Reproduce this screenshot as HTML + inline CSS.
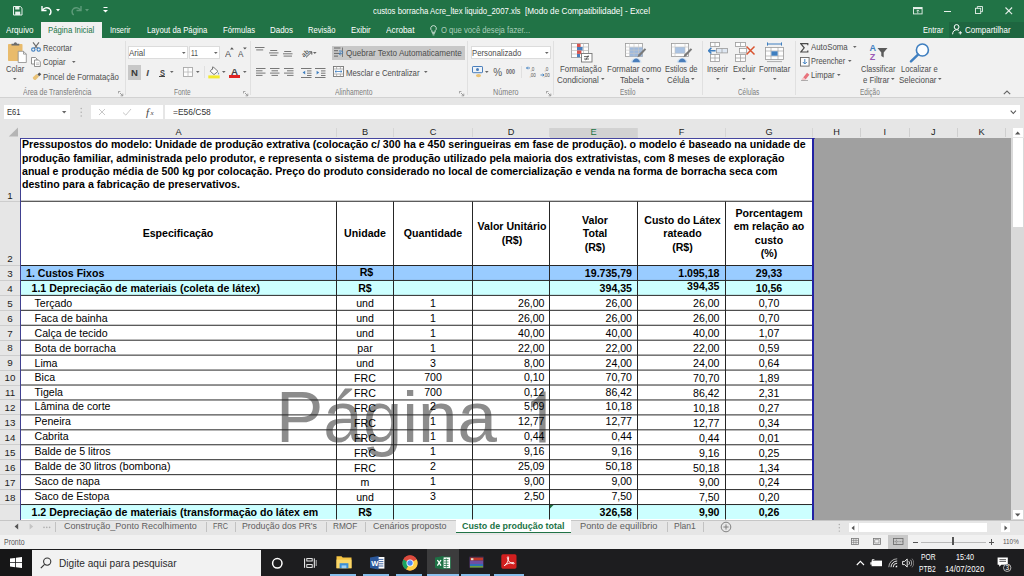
<!DOCTYPE html>
<html><head><meta charset="utf-8"><title>Excel</title>
<style>
html,body{margin:0;padding:0;}
body{width:1024px;height:576px;overflow:hidden;position:relative;background:#e6e6e6;font-family:"Liberation Sans",sans-serif;}
div,svg{box-sizing:border-box;}
.g{position:absolute;}
</style></head><body>
<div style="position:absolute;left:0px;top:0px;width:1024px;height:37.5px;background:#217346;"></div>
<div style="position:absolute;left:372.5px;top:5.8px;font-size:9px;line-height:11px;color:#fff;font-weight:normal;white-space:nowrap;transform-origin:0 0;transform:scaleX(0.8646);">custos borracha Acre_ltex liquido_2007.xls</div>
<div style="position:absolute;left:525px;top:5.8px;font-size:9px;line-height:11px;color:#fff;font-weight:normal;white-space:nowrap;transform-origin:0 0;transform:scaleX(0.9119);">[Modo de Compatibilidade] - Excel</div>
<svg style="position:absolute;left:13px;top:6px" width="10" height="10" viewBox="0 0 10 10"><path d="M0.5 0.5h6.8l1.7 1.7v6.8h-8.5z" fill="none" stroke="#e8f1ec" stroke-width="1"/><rect x="2.2" y="0.5" width="4.2" height="3" fill="#e8f1ec"/><rect x="2.2" y="5.6" width="5" height="3.4" fill="#e8f1ec"/></svg>
<svg style="position:absolute;left:41px;top:5px" width="12" height="11" viewBox="0 0 12 11"><path d="M1 1v4.5h4.5" fill="none" stroke="#fff" stroke-width="1.4"/><path d="M1.5 5.2C3 2.8 6 2 8.3 3.5c2.2 1.6 2.2 4.6 0 6.5" fill="none" stroke="#fff" stroke-width="1.5"/></svg>
<svg style="position:absolute;left:56px;top:9px" width="5" height="3" viewBox="0 0 5 3"><path d="M0 0h4l-2 2.4z" fill="#fff"/></svg>
<svg style="position:absolute;left:70px;top:5px" width="12" height="11" viewBox="0 0 12 11"><path d="M11 1v4.5h-4.5" fill="none" stroke="#5e9b7a" stroke-width="1.4"/><path d="M10.5 5.2C9 2.8 6 2 3.7 3.5c-2.2 1.6-2.2 4.6 0 6.5" fill="none" stroke="#5e9b7a" stroke-width="1.5"/></svg>
<svg style="position:absolute;left:85px;top:9px" width="5" height="3" viewBox="0 0 5 3"><path d="M0 0h4l-2 2.4z" fill="#5e9b7a"/></svg>
<svg style="position:absolute;left:103px;top:7px" width="6" height="7" viewBox="0 0 6 7"><rect x="0.5" y="0" width="4" height="1" fill="#fff"/><path d="M0 3h5l-2.5 2.6z" fill="#fff"/></svg>
<svg style="position:absolute;left:913px;top:6.8px" width="10" height="8" viewBox="0 0 10 8"><rect x="0.5" y="0.5" width="8.6" height="6.4" fill="none" stroke="#e8f1ec" stroke-width="0.9"/><rect x="0.5" y="0.5" width="8.6" height="1.6" fill="#e8f1ec"/><path d="M4.8 3v3.4M3.4 4.3l1.4-1.4 1.4 1.4" stroke="#e8f1ec" stroke-width="0.8" fill="none"/></svg>
<div style="position:absolute;left:944px;top:11.2px;width:7px;height:1px;background:#e8f1ec;"></div>
<svg style="position:absolute;left:974.5px;top:5.8px" width="8" height="8" viewBox="0 0 8 8"><rect x="0.5" y="2.3" width="5.2" height="5.2" fill="none" stroke="#e8f1ec" stroke-width="0.9"/><path d="M2.3 2.3v-1.8h5.2v5.2h-1.8" fill="none" stroke="#e8f1ec" stroke-width="0.9"/></svg>
<svg style="position:absolute;left:1004.6px;top:6.8px" width="8" height="8" viewBox="0 0 8 8"><path d="M0.5 0.5l6.6 6.6M7.1 0.5l-6.6 6.6" stroke="#e8f1ec" stroke-width="1.1"/></svg>
<div style="position:absolute;left:41px;top:22px;width:61px;height:16px;background:#f1f1f1;"></div>
<div style="position:absolute;left:5.5px;top:25.0px;font-size:9px;line-height:11px;color:#fff;font-weight:normal;white-space:nowrap;transform-origin:0 0;transform:scaleX(0.9012);">Arquivo</div>
<div style="position:absolute;left:48px;top:25.0px;font-size:9px;line-height:11px;color:#217346;font-weight:normal;white-space:nowrap;transform-origin:0 0;transform:scaleX(0.8649);">Página Inicial</div>
<div style="position:absolute;left:110px;top:25.0px;font-size:9px;line-height:11px;color:#fff;font-weight:normal;white-space:nowrap;transform-origin:0 0;transform:scaleX(0.8198);">Inserir</div>
<div style="position:absolute;left:146.7px;top:25.0px;font-size:9px;line-height:11px;color:#fff;font-weight:normal;white-space:nowrap;transform-origin:0 0;transform:scaleX(0.8607);">Layout da Página</div>
<div style="position:absolute;left:222.5px;top:25.0px;font-size:9px;line-height:11px;color:#fff;font-weight:normal;white-space:nowrap;transform-origin:0 0;transform:scaleX(0.8532);">Fórmulas</div>
<div style="position:absolute;left:270px;top:25.0px;font-size:9px;line-height:11px;color:#fff;font-weight:normal;white-space:nowrap;transform-origin:0 0;transform:scaleX(0.8841);">Dados</div>
<div style="position:absolute;left:308px;top:25.0px;font-size:9px;line-height:11px;color:#fff;font-weight:normal;white-space:nowrap;transform-origin:0 0;transform:scaleX(0.8458);">Revisão</div>
<div style="position:absolute;left:350.8px;top:25.0px;font-size:9px;line-height:11px;color:#fff;font-weight:normal;white-space:nowrap;transform-origin:0 0;transform:scaleX(0.8754);">Exibir</div>
<div style="position:absolute;left:386px;top:25.0px;font-size:9px;line-height:11px;color:#fff;font-weight:normal;white-space:nowrap;transform-origin:0 0;transform:scaleX(0.9189);">Acrobat</div>
<svg style="position:absolute;left:430px;top:24.5px" width="7" height="11" viewBox="0 0 7 11"><path d="M3.5 0.6a2.8 2.8 0 0 1 1.6 5.1v1.6h-3.2v-1.6a2.8 2.8 0 0 1 1.6-5.1z" fill="none" stroke="#dcebe2" stroke-width="0.9"/><path d="M2.2 8.6h2.6M2.6 9.9h1.8" stroke="#dcebe2" stroke-width="0.8"/></svg>
<div style="position:absolute;left:441px;top:25.0px;font-size:9px;line-height:11px;color:#a9cdb9;font-weight:normal;white-space:nowrap;transform-origin:0 0;transform:scaleX(0.8512);">O que você deseja fazer...</div>
<div style="position:absolute;left:923px;top:25.0px;font-size:9px;line-height:11px;color:#fff;font-weight:normal;white-space:nowrap;transform-origin:0 0;transform:scaleX(0.8364);">Entrar</div>
<div style="position:absolute;left:949px;top:22px;width:75px;height:15.5px;background:#1e6640;"></div>
<svg style="position:absolute;left:951.5px;top:24px" width="11" height="11" viewBox="0 0 11 11"><circle cx="4.6" cy="3" r="2.4" fill="none" stroke="#fff" stroke-width="1"/><path d="M0.6 10.3c0-3 1.8-4.5 4-4.5 0.9 0 1.7 0.2 2.3 0.6" fill="none" stroke="#fff" stroke-width="1"/><path d="M6.6 8.8h3.4M8.3 7.1v3.4" stroke="#fff" stroke-width="0.9"/></svg>
<div style="position:absolute;left:964.8px;top:25.0px;font-size:9px;line-height:11px;color:#fff;font-weight:normal;white-space:nowrap;transform-origin:0 0;transform:scaleX(0.8851);">Compartilhar</div>
<div style="position:absolute;left:0px;top:37.5px;width:1024px;height:60px;background:#f1f1f1;"></div>
<div style="position:absolute;left:0px;top:97px;width:1024px;height:1px;background:#d2d2d2;"></div>
<div style="position:absolute;left:4px;top:104.6px;width:66px;height:14.6px;background:#fff;"></div>
<div style="position:absolute;left:7px;top:107px;font-size:9px;line-height:11px;color:#333;font-weight:normal;white-space:nowrap;transform-origin:0 0;transform:scaleX(0.8430);">E61</div>
<svg style="position:absolute;left:62px;top:111px" width="5" height="3" viewBox="0 0 5 3"><path d="M0 0h4.4l-2.2 2.4z" fill="#666"/></svg>
<svg style="position:absolute;left:80px;top:107px" width="3" height="11" viewBox="0 0 3 11"><circle cx="1.2" cy="1.5" r="0.7" fill="#aaa"/><circle cx="1.2" cy="5.3" r="0.7" fill="#aaa"/><circle cx="1.2" cy="9" r="0.7" fill="#aaa"/></svg>
<div style="position:absolute;left:91px;top:104.6px;width:72px;height:14.6px;background:#fff;"></div>
<svg style="position:absolute;left:98px;top:108px" width="8" height="8" viewBox="0 0 8 8"><path d="M1 1l6 6M7 1l-6 6" stroke="#c8c8c8" stroke-width="1"/></svg>
<svg style="position:absolute;left:122px;top:108px" width="10" height="8" viewBox="0 0 10 8"><path d="M1 4.5l2.8 2.6L9 1" stroke="#c8c8c8" stroke-width="1" fill="none"/></svg>
<div style="position:absolute;top:105.5px;font-size:11px;line-height:13px;color:#444;font-weight:normal;white-space:nowrap;left:146px;font-family:'Liberation Serif',serif;"><i>f</i></div>
<div style="position:absolute;top:109px;font-size:7px;line-height:9px;color:#444;font-weight:normal;white-space:nowrap;left:150.5px;font-family:'Liberation Serif',serif;font-style:italic;">x</div>
<div style="position:absolute;left:165px;top:104.6px;width:855px;height:14.6px;background:#fff;"></div>
<div style="position:absolute;left:173px;top:107px;font-size:9px;line-height:11px;color:#333;font-weight:normal;white-space:nowrap;transform-origin:0 0;transform:scaleX(0.9384);">=E56/C58</div>
<svg style="position:absolute;left:1010px;top:110px" width="7" height="5" viewBox="0 0 7 5"><path d="M0.7 0.7l2.6 2.8 2.6-2.8" stroke="#555" stroke-width="1.1" fill="none"/></svg>
<div style="position:absolute;left:124.5px;top:41px;width:1px;height:54px;background:#e0e0e0;"></div>
<div style="position:absolute;left:250px;top:41px;width:1px;height:54px;background:#e0e0e0;"></div>
<div style="position:absolute;left:467px;top:41px;width:1px;height:54px;background:#e0e0e0;"></div>
<div style="position:absolute;left:552.5px;top:41px;width:1px;height:54px;background:#e0e0e0;"></div>
<div style="position:absolute;left:701.5px;top:41px;width:1px;height:54px;background:#e0e0e0;"></div>
<div style="position:absolute;left:795px;top:41px;width:1px;height:54px;background:#e0e0e0;"></div>
<svg style="position:absolute;left:7px;top:41px" width="21" height="23" viewBox="0 0 21 23"><rect x="1" y="3" width="14.5" height="17" rx="0.8" fill="#e9bb6c"/><path d="M4.5 4.6V2.8h2.3a1.6 1.6 0 0 1 3.2 0h2.3v1.8z" fill="#6b6b6b"/><path d="M11.2 10.3h5.3l2.8 2.8v8.4h-8.1z" fill="#fff" stroke="#8a8a8a" stroke-width="0.8"/><path d="M16.5 10.3v2.8h2.8" fill="none" stroke="#8a8a8a" stroke-width="0.8"/></svg>
<div style="position:absolute;left:5.6px;top:64.28px;font-size:9px;line-height:11px;color:#4d4d4d;font-weight:normal;white-space:nowrap;transform-origin:0 0;transform:scaleX(0.8462);">Colar</div>
<svg style="position:absolute;left:13.2px;top:78px" width="4" height="3" viewBox="0 0 4 3"><path d="M0 0h3.6l-1.8 2z" fill="#666"/></svg>
<svg style="position:absolute;left:30.5px;top:42px" width="10" height="10" viewBox="0 0 10 10"><path d="M2 0.3l4.6 6M8 0.3L3.4 6.3" stroke="#6c6c6c" stroke-width="1.1" fill="none"/><circle cx="2.3" cy="7.6" r="1.7" fill="none" stroke="#3f7fc0" stroke-width="1.1"/><circle cx="7.7" cy="7.6" r="1.7" fill="none" stroke="#3f7fc0" stroke-width="1.1"/></svg>
<div style="position:absolute;left:43px;top:42.53px;font-size:9px;line-height:11px;color:#4d4d4d;font-weight:normal;white-space:nowrap;transform-origin:0 0;transform:scaleX(0.8403);">Recortar</div>
<svg style="position:absolute;left:31px;top:57px" width="10" height="10" viewBox="0 0 10 10"><path d="M0.5 0.5h4l1.5 1.5v5h-5.5z" fill="#fff" stroke="#777" stroke-width="0.8"/><path d="M3.5 3h4l1.8 1.8v4.7h-5.8z" fill="#fff" stroke="#777" stroke-width="0.8"/><path d="M5 6h3M5 7.6h3" stroke="#999" stroke-width="0.6"/></svg>
<div style="position:absolute;left:43px;top:56.78px;font-size:9px;line-height:11px;color:#4d4d4d;font-weight:normal;white-space:nowrap;transform-origin:0 0;transform:scaleX(0.8524);">Copiar</div>
<svg style="position:absolute;left:71.9px;top:60.5px" width="4" height="3" viewBox="0 0 4 3"><path d="M0 0h3.6l-1.8 2z" fill="#666"/></svg>
<svg style="position:absolute;left:31.5px;top:72px" width="10" height="9" viewBox="0 0 10 9"><path d="M5.3 2.4L7.4 0.4l1.9 1.9-2.1 2z" fill="#555"/><path d="M1 5.2l3.4-3.2 2.6 2.6-3.4 3.3c-1 0.9-3.6-1.7-2.6-2.7z" fill="#e9c277"/></svg>
<div style="position:absolute;left:43px;top:71.53px;font-size:9px;line-height:11px;color:#4d4d4d;font-weight:normal;white-space:nowrap;transform-origin:0 0;transform:scaleX(0.8659);">Pincel de Formatação</div>
<div style="position:absolute;left:23px;top:87.2px;font-size:8.5px;line-height:10.5px;color:#7c7c7c;font-weight:normal;white-space:nowrap;transform-origin:0 0;transform:scaleX(0.8167);">Área de Transferência</div>
<svg style="position:absolute;left:117.5px;top:90.5px" width="6" height="6" viewBox="0 0 6 6"><path d="M0.4 2.4V0.4H2.4" fill="none" stroke="#8a8a8a" stroke-width="0.8"/><path d="M2 2l2.6 2.6M4.8 2.6v2.2H2.6" fill="none" stroke="#8a8a8a" stroke-width="0.8"/></svg>
<div style="position:absolute;left:127.7px;top:45.7px;width:60.3px;height:13.6px;background:#fff;border:1px solid #dcdcdc;"></div>
<div style="position:absolute;left:188.6px;top:45.7px;width:31px;height:13.6px;background:#fff;border:1px solid #dcdcdc;"></div>
<div style="position:absolute;left:129.4px;top:47.98px;font-size:9px;line-height:11px;color:#4d4d4d;font-weight:normal;white-space:nowrap;transform-origin:0 0;transform:scaleX(0.8887);">Arial</div>
<svg style="position:absolute;left:182.2px;top:51.5px" width="4" height="3" viewBox="0 0 4 3"><path d="M0 0h3.6l-1.8 2z" fill="#666"/></svg>
<div style="position:absolute;left:191px;top:47.98px;font-size:9px;line-height:11px;color:#4d4d4d;font-weight:normal;white-space:nowrap;transform-origin:0 0;transform:scaleX(0.7278);">11</div>
<svg style="position:absolute;left:213.5px;top:51.5px" width="4" height="3" viewBox="0 0 4 3"><path d="M0 0h3.6l-1.8 2z" fill="#666"/></svg>
<div style="position:absolute;left:224.5px;top:48.06px;font-size:9.5px;line-height:11.5px;color:#4d4d4d;font-weight:normal;white-space:nowrap;transform-origin:0 0;transform:scaleX(0.9469);">A</div>
<svg style="position:absolute;left:229.5px;top:46.5px" width="4" height="3" viewBox="0 0 4 3"><path d="M0 2.4L1.9 0.3 3.8 2.4z" fill="#555"/></svg>
<div style="position:absolute;left:238px;top:48.9px;font-size:8.5px;line-height:10.5px;color:#4d4d4d;font-weight:normal;white-space:nowrap;transform-origin:0 0;transform:scaleX(0.9525);">A</div>
<svg style="position:absolute;left:242.5px;top:46.7px" width="4" height="3" viewBox="0 0 4 3"><path d="M0 0.4h3.8L1.9 2.5z" fill="#555"/></svg>
<div style="position:absolute;left:127.7px;top:64.5px;width:13.4px;height:15px;background:#c8c8c8;"></div>
<div style="position:absolute;left:130.9px;top:66.66px;font-size:9.5px;line-height:11.5px;color:#3a3a3a;font-weight:bold;white-space:nowrap;transform-origin:0 0;transform:scaleX(1.0057);">N</div>
<div style="position:absolute;top:66.66px;font-size:9.5px;line-height:11.5px;color:#4a4a4a;font-weight:bold;white-space:nowrap;left:146.3px;font-style:italic;">I</div>
<div style="position:absolute;left:159.6px;top:66.66px;font-size:9.5px;line-height:11.5px;color:#444;font-weight:bold;white-space:nowrap;transform-origin:0 0;transform:scaleX(0.7891);">S</div>
<div style="position:absolute;left:159.4px;top:76.0px;width:5.6px;height:0.9px;background:#444;"></div>
<svg style="position:absolute;left:170.2px;top:70.5px" width="4" height="3" viewBox="0 0 4 3"><path d="M0 0h3.6l-1.8 2z" fill="#666"/></svg>
<svg style="position:absolute;left:183px;top:67.4px" width="10" height="10" viewBox="0 0 10 10"><rect x="0.5" y="0.5" width="9" height="9" fill="#fdfdfd" stroke="#a8a8a8" stroke-width="0.9"/><path d="M5 0.5v9M0.5 5h9" stroke="#b8b8b8" stroke-width="0.8"/></svg>
<svg style="position:absolute;left:196.2px;top:70.5px" width="4" height="3" viewBox="0 0 4 3"><path d="M0 0h3.6l-1.8 2z" fill="#666"/></svg>
<div style="position:absolute;left:204px;top:66px;width:1px;height:12px;background:#e0e0e0;"></div>
<svg style="position:absolute;left:208px;top:65.5px" width="12" height="13" viewBox="0 0 12 13"><path d="M5.6 1.2L10 5.4 6 8.6 2.2 5.2z" fill="#fbfbfb" stroke="#6f6f6f" stroke-width="0.9"/><path d="M4.6 3.6V0.6" stroke="#6f6f6f" stroke-width="0.9"/><path d="M10.4 6.2c0.8 1 1 1.6 0.4 2.2-0.8 0.2-1-0.8-0.4-2.2z" fill="#6a8fc0"/><rect x="0.3" y="9.4" width="11.4" height="3" fill="#f3ea2e"/></svg>
<svg style="position:absolute;left:221.5px;top:70.5px" width="4" height="3" viewBox="0 0 4 3"><path d="M0 0h3.6l-1.8 2z" fill="#666"/></svg>
<div style="position:absolute;left:230.6px;top:66.06px;font-size:9.5px;line-height:11.5px;color:#444;font-weight:bold;white-space:nowrap;transform-origin:0 0;transform:scaleX(1.0203);">A</div>
<div style="position:absolute;left:228.6px;top:74.9px;width:11px;height:2.9px;background:#e02222;"></div>
<svg style="position:absolute;left:242.5px;top:70.5px" width="4" height="3" viewBox="0 0 4 3"><path d="M0 0h3.6l-1.8 2z" fill="#666"/></svg>
<div style="position:absolute;left:173.8px;top:87.2px;font-size:8.5px;line-height:10.5px;color:#7c7c7c;font-weight:normal;white-space:nowrap;transform-origin:0 0;transform:scaleX(0.7637);">Fonte</div>
<svg style="position:absolute;left:242.5px;top:90.5px" width="6" height="6" viewBox="0 0 6 6"><path d="M0.4 2.4V0.4H2.4" fill="none" stroke="#8a8a8a" stroke-width="0.8"/><path d="M2 2l2.6 2.6M4.8 2.6v2.2H2.6" fill="none" stroke="#8a8a8a" stroke-width="0.8"/></svg>
<svg style="position:absolute;left:255px;top:46.5px" width="11" height="12" viewBox="0 0 11 12"><rect x="0" y="0.0" width="9.5" height="1" fill="#777"/><rect x="1.2" y="2.4" width="7" height="1" fill="#777"/></svg>
<svg style="position:absolute;left:269px;top:50px" width="11" height="12" viewBox="0 0 11 12"><rect x="1.2" y="0.0" width="7" height="1" fill="#777"/><rect x="0" y="2.4" width="9.5" height="1" fill="#777"/><rect x="1.2" y="4.8" width="7" height="1" fill="#777"/></svg>
<svg style="position:absolute;left:283px;top:51.4px" width="11" height="12" viewBox="0 0 11 12"><rect x="1.2" y="0.0" width="7" height="1" fill="#777"/><rect x="0" y="2.3" width="9.5" height="1" fill="#777"/><rect x="0.6" y="4.6" width="8.4" height="1" fill="#777"/></svg>
<svg style="position:absolute;left:300.5px;top:46.5px" width="12" height="12" viewBox="0 0 12 12"><text x="0.2" y="8.6" font-size="6.6" font-weight="bold" font-family="Liberation Sans" fill="#5a5a5a" transform="rotate(-40 4 6)">ab</text><path d="M5 10.4l5.6-5.400M10.8 7.600V4.800H8" stroke="#555" stroke-width="1" fill="none"/></svg>
<svg style="position:absolute;left:313.2px;top:51.5px" width="4" height="3" viewBox="0 0 4 3"><path d="M0 0h3.6l-1.8 2z" fill="#666"/></svg>
<svg style="position:absolute;left:256px;top:68.3px" width="11" height="12" viewBox="0 0 11 12"><rect x="0" y="0.0" width="9.5" height="1" fill="#777"/><rect x="0" y="2.3" width="6.5" height="1" fill="#777"/><rect x="0" y="4.6" width="9.5" height="1" fill="#777"/><rect x="0" y="6.8999999999999995" width="6.5" height="1" fill="#777"/></svg>
<svg style="position:absolute;left:270px;top:68.3px" width="11" height="12" viewBox="0 0 11 12"><rect x="0" y="0.0" width="9.5" height="1" fill="#777"/><rect x="1.5" y="2.3" width="6.5" height="1" fill="#777"/><rect x="0" y="4.6" width="9.5" height="1" fill="#777"/><rect x="1.5" y="6.8999999999999995" width="6.5" height="1" fill="#777"/></svg>
<svg style="position:absolute;left:283.5px;top:68.3px" width="11" height="12" viewBox="0 0 11 12"><rect x="0" y="0.0" width="9.5" height="1" fill="#777"/><rect x="3" y="2.3" width="6.5" height="1" fill="#777"/><rect x="0" y="4.6" width="9.5" height="1" fill="#777"/><rect x="3" y="6.8999999999999995" width="6.5" height="1" fill="#777"/></svg>
<svg style="position:absolute;left:301px;top:67.8px" width="11" height="10" viewBox="0 0 11 10"><rect x="0" y="0" width="10.5" height="1" fill="#777"/><rect x="6" y="2.4" width="4.5" height="1" fill="#777"/><rect x="6" y="4.7" width="4.5" height="1" fill="#777"/><rect x="6" y="7" width="4.5" height="1" fill="#777"/><rect x="0" y="9" width="10.5" height="1" fill="#777"/><path d="M4.2 2.8L1.6 4.6l2.6 1.8z" fill="#3f7fc0"/></svg>
<svg style="position:absolute;left:315px;top:67.8px" width="11" height="10" viewBox="0 0 11 10"><rect x="0" y="0" width="10.5" height="1" fill="#777"/><rect x="6" y="2.4" width="4.5" height="1" fill="#777"/><rect x="6" y="4.7" width="4.5" height="1" fill="#777"/><rect x="6" y="7" width="4.5" height="1" fill="#777"/><rect x="0" y="9" width="10.5" height="1" fill="#777"/><path d="M1.6 2.8l2.6 1.8-2.6 1.8z" fill="#3f7fc0"/></svg>
<div style="position:absolute;left:332px;top:45.5px;width:132.5px;height:14px;background:#c8c8c8;"></div>
<svg style="position:absolute;left:334px;top:47px" width="10" height="11" viewBox="0 0 10 11"><rect x="0" y="0.5" width="6.5" height="1" fill="#666"/><rect x="0" y="3.2" width="4" height="1" fill="#666"/><rect x="0" y="5.9" width="6.5" height="1" fill="#666"/><rect x="0" y="8.6" width="4" height="1" fill="#666"/><path d="M8.5 0.5v9.5" stroke="#666" stroke-width="0.8"/><path d="M5 4h2.2a1.3 1.3 0 0 1 0 2.8H5.4M6.6 5.4L5 6.8l1.6 1.3" stroke="#3f7fc0" stroke-width="0.9" fill="none"/></svg>
<div style="position:absolute;left:345.5px;top:47.78px;font-size:9px;line-height:11px;color:#4d4d4d;font-weight:normal;white-space:nowrap;transform-origin:0 0;transform:scaleX(0.8983);">Quebrar Texto Automaticamente</div>
<svg style="position:absolute;left:333px;top:66px" width="11" height="11" viewBox="0 0 11 11"><rect x="0.5" y="0.5" width="10" height="10" fill="#fdfdfd" stroke="#777" stroke-width="0.9"/><path d="M0.5 3h10M0.5 8h10M3.6 0.5V3M7.4 0.5V3M3.6 8v2.5M7.4 8v2.5" stroke="#999" stroke-width="0.7"/><path d="M2 5.5h7M3.4 4.4L2 5.5l1.4 1.1M7.6 4.4L9 5.5 7.6 6.6" stroke="#3f7fc0" stroke-width="0.8" fill="none"/></svg>
<div style="position:absolute;left:345.5px;top:67.53px;font-size:9px;line-height:11px;color:#4d4d4d;font-weight:normal;white-space:nowrap;transform-origin:0 0;transform:scaleX(0.8644);">Mesclar e Centralizar</div>
<svg style="position:absolute;left:424.2px;top:70.5px" width="4" height="3" viewBox="0 0 4 3"><path d="M0 0h3.6l-1.8 2z" fill="#666"/></svg>
<div style="position:absolute;left:334.5px;top:87.2px;font-size:8.5px;line-height:10.5px;color:#7c7c7c;font-weight:normal;white-space:nowrap;transform-origin:0 0;transform:scaleX(0.7936);">Alinhamento</div>
<svg style="position:absolute;left:459.0px;top:90.5px" width="6" height="6" viewBox="0 0 6 6"><path d="M0.4 2.4V0.4H2.4" fill="none" stroke="#8a8a8a" stroke-width="0.8"/><path d="M2 2l2.6 2.6M4.8 2.6v2.2H2.6" fill="none" stroke="#8a8a8a" stroke-width="0.8"/></svg>
<div style="position:absolute;left:470.5px;top:45.7px;width:80.5px;height:13.6px;background:#fff;border:1px solid #dcdcdc;"></div>
<div style="position:absolute;left:472px;top:47.78px;font-size:9px;line-height:11px;color:#4d4d4d;font-weight:normal;white-space:nowrap;transform-origin:0 0;transform:scaleX(0.8644);">Personalizado</div>
<svg style="position:absolute;left:544.7px;top:51.5px" width="4" height="3" viewBox="0 0 4 3"><path d="M0 0h3.6l-1.8 2z" fill="#666"/></svg>
<svg style="position:absolute;left:471.5px;top:66px" width="12" height="12" viewBox="0 0 12 12"><rect x="0.5" y="0.5" width="10" height="6.2" rx="0.6" fill="#eef3f8" stroke="#4a7ebb" stroke-width="1"/><circle cx="5.5" cy="3.6" r="1.5" fill="#4a7ebb"/><ellipse cx="6.5" cy="9.6" rx="2.6" ry="1.6" fill="#e9c277"/></svg>
<svg style="position:absolute;left:485.2px;top:70.5px" width="4" height="3" viewBox="0 0 4 3"><path d="M0 0h3.6l-1.8 2z" fill="#666"/></svg>
<div style="position:absolute;top:67.03px;font-size:10px;line-height:12px;color:#5a5a5a;font-weight:normal;white-space:nowrap;left:493.2px;">%</div>
<div style="position:absolute;left:506.3px;top:68.47px;font-size:6.6px;line-height:8.6px;color:#666;font-weight:bold;white-space:nowrap;transform-origin:0 0;transform:scaleX(0.8173);">000</div>
<div style="position:absolute;left:520.5px;top:66px;width:1px;height:12px;background:#e0e0e0;"></div>
<svg style="position:absolute;left:526px;top:66px" width="10" height="12" viewBox="0 0 10 12"><path d="M0.5 2h3.5M1.8 0.7L0.5 2l1.3 1.3" stroke="#3f7fc0" stroke-width="0.9" fill="none"/><text x="4.6" y="4.6" font-size="4.6" font-family="Liberation Sans" fill="#555">,0</text><text x="3.4" y="10.6" font-size="4.6" font-family="Liberation Sans" fill="#555">,00</text></svg>
<svg style="position:absolute;left:540px;top:66px" width="10" height="12" viewBox="0 0 10 12"><path d="M0.5 9h3.5M2.7 7.7L4 9 2.7 10.3" stroke="#3f7fc0" stroke-width="0.9" fill="none"/><text x="4.6" y="4.6" font-size="4.6" font-family="Liberation Sans" fill="#555">,0</text><text x="3.4" y="10.6" font-size="4.6" font-family="Liberation Sans" fill="#555">,00</text></svg>
<div style="position:absolute;left:492.5px;top:87.2px;font-size:8.5px;line-height:10.5px;color:#7c7c7c;font-weight:normal;white-space:nowrap;transform-origin:0 0;transform:scaleX(0.8435);">Número</div>
<svg style="position:absolute;left:545.5px;top:90.5px" width="6" height="6" viewBox="0 0 6 6"><path d="M0.4 2.4V0.4H2.4" fill="none" stroke="#8a8a8a" stroke-width="0.8"/><path d="M2 2l2.6 2.6M4.8 2.6v2.2H2.6" fill="none" stroke="#8a8a8a" stroke-width="0.8"/></svg>
<svg style="position:absolute;left:571px;top:43px" width="22" height="20" viewBox="0 0 22 20"><rect x="0.5" y="0.5" width="17" height="14" fill="#fdfdfd" stroke="#9a9a9a" stroke-width="0.8"/><path d="M0.5 4h17M0.5 7.5h17M0.5 11h17M12.5 0.5v14" stroke="#bbb" stroke-width="0.7"/><rect x="6" y="0.8" width="3.6" height="3.2" fill="#d9534f"/><rect x="6" y="4" width="5.6" height="3.4" fill="#4a7ebb"/><rect x="6" y="7.5" width="4.4" height="3.4" fill="#d9534f"/><rect x="6" y="11" width="3" height="3.2" fill="#4a7ebb"/><rect x="10.5" y="10.5" width="10.5" height="8.5" fill="#fff" stroke="#777" stroke-width="0.9"/><path d="M13 13.6h5M13 16h5M17.3 12.4l-2.6 4.8" stroke="#444" stroke-width="0.8"/></svg>
<div style="position:absolute;left:559.5px;top:63.78px;font-size:9px;line-height:11px;color:#4d4d4d;font-weight:normal;white-space:nowrap;transform-origin:0 0;transform:scaleX(0.8705);">Formatação</div>
<div style="position:absolute;left:557px;top:74.53px;font-size:9px;line-height:11px;color:#4d4d4d;font-weight:normal;white-space:nowrap;transform-origin:0 0;transform:scaleX(0.8888);">Condicional</div>
<svg style="position:absolute;left:600.9000000000001px;top:78px" width="4" height="3" viewBox="0 0 4 3"><path d="M0 0h3.6l-1.8 2z" fill="#666"/></svg>
<svg style="position:absolute;left:624.5px;top:43px" width="22" height="20" viewBox="0 0 22 20"><rect x="0.5" y="0.5" width="17" height="13" fill="#fdfdfd" stroke="#9a9a9a" stroke-width="0.8"/><rect x="4.5" y="4.2" width="13" height="9.3" fill="#9fb9dc"/><path d="M0.5 4h17M0.5 7.2h17M0.5 10.4h17M4.5 0.5v13M9 0.5v13M13.5 0.5v13" stroke="#c8c8c8" stroke-width="0.6"/><path d="M19.8 5.2l1.4 1.4-6.2 6.6-2.6 1 1-2.6z" fill="#7a7a7a"/><path d="M5.6 19.4c1-6 10-6 11 0z" fill="#cfe0f2"/><path d="M7.4 19.2c1.2-4.800 6.400-4.800 7.600 0z" fill="#4a7ebb"/></svg>
<div style="position:absolute;left:607px;top:63.78px;font-size:9px;line-height:11px;color:#4d4d4d;font-weight:normal;white-space:nowrap;transform-origin:0 0;transform:scaleX(0.8900);">Formatar como</div>
<div style="position:absolute;left:620px;top:74.53px;font-size:9px;line-height:11px;color:#4d4d4d;font-weight:normal;white-space:nowrap;transform-origin:0 0;transform:scaleX(0.8974);">Tabela</div>
<svg style="position:absolute;left:645.5px;top:78px" width="4" height="3" viewBox="0 0 4 3"><path d="M0 0h3.6l-1.8 2z" fill="#666"/></svg>
<svg style="position:absolute;left:670.5px;top:43px" width="22" height="20" viewBox="0 0 22 20"><rect x="0.5" y="0.5" width="17" height="13" fill="#fdfdfd" stroke="#9a9a9a" stroke-width="0.8"/><rect x="4" y="4" width="10" height="6.4" fill="#a9c2e2"/><path d="M0.5 4h17M0.5 10.4h17M4 0.5v13M14 0.5v13" stroke="#c4c4c4" stroke-width="0.6"/><path d="M19.8 5.2l1.4 1.4-6.2 6.6-2.6 1 1-2.6z" fill="#7a7a7a"/><path d="M5.6 19.4c1-6 10-6 11 0z" fill="#cfe0f2"/><path d="M7.4 19.2c1.2-4.800 6.400-4.800 7.600 0z" fill="#4a7ebb"/></svg>
<div style="position:absolute;left:664.5px;top:63.78px;font-size:9px;line-height:11px;color:#4d4d4d;font-weight:normal;white-space:nowrap;transform-origin:0 0;transform:scaleX(0.8329);">Estilos de</div>
<div style="position:absolute;left:667px;top:74.53px;font-size:9px;line-height:11px;color:#4d4d4d;font-weight:normal;white-space:nowrap;transform-origin:0 0;transform:scaleX(0.8818);">Célula</div>
<svg style="position:absolute;left:691.0px;top:78px" width="4" height="3" viewBox="0 0 4 3"><path d="M0 0h3.6l-1.8 2z" fill="#666"/></svg>
<div style="position:absolute;left:619.5px;top:87.2px;font-size:8.5px;line-height:10.5px;color:#7c7c7c;font-weight:normal;white-space:nowrap;transform-origin:0 0;transform:scaleX(0.7457);">Estilo</div>
<svg style="position:absolute;left:707.5px;top:42px" width="21" height="21" viewBox="0 0 21 21"><rect x="2.5" y="0.5" width="9" height="4" fill="#fdfdfd" stroke="#9a9a9a" stroke-width="0.8"/><rect x="8.5" y="6.5" width="11" height="4.4" fill="#dfe8f3" stroke="#9a9a9a" stroke-width="0.8"/><rect x="2.5" y="12.5" width="9" height="7" fill="#fdfdfd" stroke="#9a9a9a" stroke-width="0.8"/><path d="M2.5 16h9M7 12.5v7M7 0.5v4M14 6.5v4.4" stroke="#9a9a9a" stroke-width="0.7"/><path d="M0.6 8.7h7M3.4 5.8L0.6 8.7l2.8 2.9" stroke="#3f7fc0" stroke-width="1.5" fill="none"/></svg>
<div style="position:absolute;left:707px;top:63.78px;font-size:9px;line-height:11px;color:#4d4d4d;font-weight:normal;white-space:nowrap;transform-origin:0 0;transform:scaleX(0.8398);">Inserir</div>
<svg style="position:absolute;left:715.7px;top:78px" width="4" height="3" viewBox="0 0 4 3"><path d="M0 0h3.6l-1.8 2z" fill="#666"/></svg>
<svg style="position:absolute;left:734.5px;top:42px" width="21" height="21" viewBox="0 0 21 21"><rect x="0.5" y="0.5" width="10" height="4" fill="#fdfdfd" stroke="#9a9a9a" stroke-width="0.8"/><rect x="4.5" y="6.5" width="7" height="4.4" fill="#fdfdfd" stroke="#9a9a9a" stroke-width="0.8"/><rect x="0.5" y="12.5" width="10" height="7" fill="#fdfdfd" stroke="#9a9a9a" stroke-width="0.8"/><path d="M0.5 16h10M5.5 12.5v7M5.5 0.5v4" stroke="#9a9a9a" stroke-width="0.7"/><path d="M11.5 4.5l8 8M19.5 4.5l-8 8" stroke="#d9532f" stroke-width="1.5" fill="none"/></svg>
<div style="position:absolute;left:732.5px;top:63.78px;font-size:9px;line-height:11px;color:#4d4d4d;font-weight:normal;white-space:nowrap;transform-origin:0 0;transform:scaleX(0.8332);">Excluir</div>
<svg style="position:absolute;left:742.0px;top:78px" width="4" height="3" viewBox="0 0 4 3"><path d="M0 0h3.6l-1.8 2z" fill="#666"/></svg>
<svg style="position:absolute;left:764.5px;top:42px" width="21" height="21" viewBox="0 0 21 21"><path d="M2.5 2h14M2.5 0.4v3.2M16.5 0.4v3.2" stroke="#3f7fc0" stroke-width="1"/><rect x="0.5" y="5.5" width="18" height="12" fill="#fdfdfd" stroke="#9a9a9a" stroke-width="0.8"/><path d="M0.5 9h18M0.5 14h18M6 5.5v12M13 5.5v12" stroke="#9a9a9a" stroke-width="0.6"/><rect x="6.4" y="9.3" width="6.2" height="4.4" fill="#3f7fc0"/><path d="M2 19.6h15" stroke="#9a9a9a" stroke-width="0.8"/></svg>
<div style="position:absolute;left:758.8px;top:63.78px;font-size:9px;line-height:11px;color:#4d4d4d;font-weight:normal;white-space:nowrap;transform-origin:0 0;transform:scaleX(0.8547);">Formatar</div>
<svg style="position:absolute;left:772.7px;top:78px" width="4" height="3" viewBox="0 0 4 3"><path d="M0 0h3.6l-1.8 2z" fill="#666"/></svg>
<div style="position:absolute;left:737.5px;top:87.2px;font-size:8.5px;line-height:10.5px;color:#7c7c7c;font-weight:normal;white-space:nowrap;transform-origin:0 0;transform:scaleX(0.7514);">Células</div>
<svg style="position:absolute;left:800px;top:42.5px" width="9" height="10" viewBox="0 0 9 10"><path d="M7.8 2.2V0.7H0.8l3.4 4.1-3.4 4.2h7V7.4" fill="none" stroke="#4a4a4a" stroke-width="1.2"/></svg>
<div style="position:absolute;left:811.3px;top:42.03px;font-size:9px;line-height:11px;color:#4d4d4d;font-weight:normal;white-space:nowrap;transform-origin:0 0;transform:scaleX(0.8733);">AutoSoma</div>
<svg style="position:absolute;left:852.9000000000001px;top:45.5px" width="4" height="3" viewBox="0 0 4 3"><path d="M0 0h3.6l-1.8 2z" fill="#666"/></svg>
<svg style="position:absolute;left:799.5px;top:57px" width="10" height="10" viewBox="0 0 10 10"><rect x="0.5" y="0.5" width="8.6" height="8.6" fill="#fdfdfd" stroke="#666" stroke-width="0.9"/><path d="M4.8 2v4.8M2.8 5l2 2 2-2" stroke="#3f7fc0" stroke-width="1" fill="none"/></svg>
<div style="position:absolute;left:811.3px;top:56.28px;font-size:9px;line-height:11px;color:#4d4d4d;font-weight:normal;white-space:nowrap;transform-origin:0 0;transform:scaleX(0.8236);">Preencher</div>
<svg style="position:absolute;left:847.5px;top:60px" width="4" height="3" viewBox="0 0 4 3"><path d="M0 0h3.6l-1.8 2z" fill="#666"/></svg>
<svg style="position:absolute;left:799.5px;top:71.5px" width="10" height="9" viewBox="0 0 10 9"><path d="M3.2 5.6L7 0.8l2.4 2-3.8 4.8z" fill="#e8737d"/><path d="M3.2 5.6l2.4 2-1 0.8H2.6L1.4 7.2z" fill="#f2c4c8"/><path d="M1 8.6h7" stroke="#888" stroke-width="0.7"/></svg>
<div style="position:absolute;left:811.3px;top:70.28px;font-size:9px;line-height:11px;color:#4d4d4d;font-weight:normal;white-space:nowrap;transform-origin:0 0;transform:scaleX(0.8615);">Limpar</div>
<svg style="position:absolute;left:837.4000000000001px;top:74px" width="4" height="3" viewBox="0 0 4 3"><path d="M0 0h3.6l-1.8 2z" fill="#666"/></svg>
<svg style="position:absolute;left:867.5px;top:42.5px" width="21" height="19" viewBox="0 0 21 19"><text x="1.5" y="8" font-size="9" font-weight="bold" font-family="Liberation Sans" fill="#3f7fc0">A</text><text x="1.8" y="17" font-size="9" font-weight="bold" font-family="Liberation Sans" fill="#9b59b6">Z</text><path d="M9.5 5h10l-3.8 4.4v5.2l-2.4-1.6V9.4z" fill="#5a5a5a"/></svg>
<div style="position:absolute;left:860.5px;top:63.78px;font-size:9px;line-height:11px;color:#4d4d4d;font-weight:normal;white-space:nowrap;transform-origin:0 0;transform:scaleX(0.8312);">Classificar</div>
<div style="position:absolute;left:862.5px;top:74.53px;font-size:9px;line-height:11px;color:#4d4d4d;font-weight:normal;white-space:nowrap;transform-origin:0 0;transform:scaleX(0.8622);">e Filtrar</div>
<svg style="position:absolute;left:890.5px;top:78px" width="4" height="3" viewBox="0 0 4 3"><path d="M0 0h3.6l-1.8 2z" fill="#666"/></svg>
<svg style="position:absolute;left:909px;top:42.5px" width="22" height="20" viewBox="0 0 22 20"><circle cx="13.4" cy="7" r="6" fill="#fbfdff" stroke="#3f7fc0" stroke-width="1.6"/><path d="M9 11.6L2 18.4" stroke="#3f7fc0" stroke-width="2.4" stroke-linecap="round"/></svg>
<div style="position:absolute;left:900.8px;top:63.78px;font-size:9px;line-height:11px;color:#4d4d4d;font-weight:normal;white-space:nowrap;transform-origin:0 0;transform:scaleX(0.8432);">Localizar e</div>
<div style="position:absolute;left:898.8px;top:74.53px;font-size:9px;line-height:11px;color:#4d4d4d;font-weight:normal;white-space:nowrap;transform-origin:0 0;transform:scaleX(0.8818);">Selecionar</div>
<svg style="position:absolute;left:937.5px;top:78px" width="4" height="3" viewBox="0 0 4 3"><path d="M0 0h3.6l-1.8 2z" fill="#666"/></svg>
<div style="position:absolute;left:859.5px;top:87.2px;font-size:8.5px;line-height:10.5px;color:#7c7c7c;font-weight:normal;white-space:nowrap;transform-origin:0 0;transform:scaleX(0.7618);">Edição</div>
<svg style="position:absolute;left:1003px;top:89.5px" width="8" height="5" viewBox="0 0 8 5"><path d="M0.8 4.2L4 1l3.2 3.2" stroke="#666" stroke-width="1.1" fill="none"/></svg>
<div style="position:absolute;left:0px;top:122px;width:1024px;height:16.5px;background:#e6e6e6;"></div>
<div style="position:absolute;left:549.5px;top:127.5px;width:88px;height:11px;background:#d2d2d2;border-bottom:1.5px solid #5a8f74;"></div>
<div style="position:absolute;top:127.2px;font-size:9.2px;line-height:11.2px;color:#1c1c1c;font-weight:normal;white-space:nowrap;left:28.5px;width:300px;text-align:center;">A</div>
<div style="position:absolute;top:127.2px;font-size:9.2px;line-height:11.2px;color:#1c1c1c;font-weight:normal;white-space:nowrap;left:215.0px;width:300px;text-align:center;">B</div>
<div style="position:absolute;top:127.2px;font-size:9.2px;line-height:11.2px;color:#1c1c1c;font-weight:normal;white-space:nowrap;left:283.0px;width:300px;text-align:center;">C</div>
<div style="position:absolute;top:127.2px;font-size:9.2px;line-height:11.2px;color:#1c1c1c;font-weight:normal;white-space:nowrap;left:361.0px;width:300px;text-align:center;">D</div>
<div style="position:absolute;top:127.2px;font-size:9.2px;line-height:11.2px;color:#217346;font-weight:normal;white-space:nowrap;left:443.5px;width:300px;text-align:center;">E</div>
<div style="position:absolute;top:127.2px;font-size:9.2px;line-height:11.2px;color:#1c1c1c;font-weight:normal;white-space:nowrap;left:531.5px;width:300px;text-align:center;">F</div>
<div style="position:absolute;top:127.2px;font-size:9.2px;line-height:11.2px;color:#1c1c1c;font-weight:normal;white-space:nowrap;left:619.0px;width:300px;text-align:center;">G</div>
<div style="position:absolute;top:127.2px;font-size:9.2px;line-height:11.2px;color:#1c1c1c;font-weight:normal;white-space:nowrap;left:686.5px;width:300px;text-align:center;">H</div>
<div style="position:absolute;top:127.2px;font-size:9.2px;line-height:11.2px;color:#1c1c1c;font-weight:normal;white-space:nowrap;left:734.75px;width:300px;text-align:center;">I</div>
<div style="position:absolute;top:127.2px;font-size:9.2px;line-height:11.2px;color:#1c1c1c;font-weight:normal;white-space:nowrap;left:783.25px;width:300px;text-align:center;">J</div>
<div style="position:absolute;top:127.2px;font-size:9.2px;line-height:11.2px;color:#1c1c1c;font-weight:normal;white-space:nowrap;left:831.5px;width:300px;text-align:center;">K</div>
<div style="position:absolute;left:860.0px;top:128px;width:1px;height:9px;background:#cfcfcf;"></div>
<div style="position:absolute;left:908.5px;top:128px;width:1px;height:9px;background:#cfcfcf;"></div>
<div style="position:absolute;left:957.0px;top:128px;width:1px;height:9px;background:#cfcfcf;"></div>
<div style="position:absolute;left:1005.0px;top:128px;width:1px;height:9px;background:#cfcfcf;"></div>
<div style="position:absolute;left:336.0px;top:128px;width:1px;height:9px;background:#d6d6d6;"></div>
<div style="position:absolute;left:393.0px;top:128px;width:1px;height:9px;background:#d6d6d6;"></div>
<div style="position:absolute;left:472.0px;top:128px;width:1px;height:9px;background:#d6d6d6;"></div>
<div style="position:absolute;left:549.0px;top:128px;width:1px;height:9px;background:#d6d6d6;"></div>
<div style="position:absolute;left:637.0px;top:128px;width:1px;height:9px;background:#d6d6d6;"></div>
<div style="position:absolute;left:725.0px;top:128px;width:1px;height:9px;background:#d6d6d6;"></div>
<div style="position:absolute;left:812.0px;top:128px;width:1px;height:9px;background:#d6d6d6;"></div>
<svg style="position:absolute;left:8px;top:127px" width="11" height="10" viewBox="0 0 11 10"><path d="M10 0.5v9H0.8z" fill="#b5b5b5"/></svg>
<div style="position:absolute;left:813px;top:138.0px;width:198px;height:381.5px;background:#a0a0a0;"></div>
<div style="position:absolute;left:20.5px;top:138.5px;width:792px;height:381.0px;background:#fff;"></div>
<div style="position:absolute;left:20.5px;top:265.5px;width:792px;height:14.94px;background:#99ccff;"></div>
<div style="position:absolute;left:20.5px;top:280.44px;width:792px;height:14.94px;background:#ccffff;"></div>
<div style="position:absolute;left:20.5px;top:504.53999999999996px;width:792px;height:14.960000000000036px;background:#ccffff;"></div>
<div style="position:absolute;left:275.6px;top:374.9px;font-size:72.5px;line-height:74.5px;color:#8c8c8c;font-weight:normal;white-space:nowrap;transform-origin:0 0;transform:scaleX(0.9790);line-height:84px;">Página</div>
<svg style="position:absolute;left:528px;top:388px" width="20" height="58" viewBox="0 0 20 58"><path d="M17.6 54.4h-6.3V14.6C9 16.8 5.8 18.6 3 19.8v-6C7.6 11.400 11.600 7.800 13.400 3.400h4.200z" fill="#8c8c8c"/></svg>
<div style="position:absolute;left:0px;top:138.5px;width:20px;height:381.0px;background:#e6e6e6;"></div>
<div style="position:absolute;top:189.8px;font-size:9.8px;line-height:11.8px;color:#1c1c1c;font-weight:normal;white-space:nowrap;left:-140px;width:300px;text-align:center;">1</div>
<div style="position:absolute;left:0px;top:201.0px;width:19.5px;height:1px;background:#cdcdcd;"></div>
<div style="position:absolute;top:252.8px;font-size:9.8px;line-height:11.8px;color:#1c1c1c;font-weight:normal;white-space:nowrap;left:-140px;width:300px;text-align:center;">2</div>
<div style="position:absolute;left:0px;top:265.0px;width:19.5px;height:1px;background:#cdcdcd;"></div>
<div style="position:absolute;top:267.74px;font-size:9.8px;line-height:11.8px;color:#1c1c1c;font-weight:normal;white-space:nowrap;left:-140px;width:300px;text-align:center;">3</div>
<div style="position:absolute;left:0px;top:279.94px;width:19.5px;height:1px;background:#cdcdcd;"></div>
<div style="position:absolute;top:282.68px;font-size:9.8px;line-height:11.8px;color:#1c1c1c;font-weight:normal;white-space:nowrap;left:-140px;width:300px;text-align:center;">4</div>
<div style="position:absolute;left:0px;top:294.88px;width:19.5px;height:1px;background:#cdcdcd;"></div>
<div style="position:absolute;top:297.62px;font-size:9.8px;line-height:11.8px;color:#1c1c1c;font-weight:normal;white-space:nowrap;left:-140px;width:300px;text-align:center;">5</div>
<div style="position:absolute;left:0px;top:309.82px;width:19.5px;height:1px;background:#cdcdcd;"></div>
<div style="position:absolute;top:312.56px;font-size:9.8px;line-height:11.8px;color:#1c1c1c;font-weight:normal;white-space:nowrap;left:-140px;width:300px;text-align:center;">6</div>
<div style="position:absolute;left:0px;top:324.76px;width:19.5px;height:1px;background:#cdcdcd;"></div>
<div style="position:absolute;top:327.5px;font-size:9.8px;line-height:11.8px;color:#1c1c1c;font-weight:normal;white-space:nowrap;left:-140px;width:300px;text-align:center;">7</div>
<div style="position:absolute;left:0px;top:339.7px;width:19.5px;height:1px;background:#cdcdcd;"></div>
<div style="position:absolute;top:342.44px;font-size:9.8px;line-height:11.8px;color:#1c1c1c;font-weight:normal;white-space:nowrap;left:-140px;width:300px;text-align:center;">8</div>
<div style="position:absolute;left:0px;top:354.64px;width:19.5px;height:1px;background:#cdcdcd;"></div>
<div style="position:absolute;top:357.38px;font-size:9.8px;line-height:11.8px;color:#1c1c1c;font-weight:normal;white-space:nowrap;left:-140px;width:300px;text-align:center;">9</div>
<div style="position:absolute;left:0px;top:369.58px;width:19.5px;height:1px;background:#cdcdcd;"></div>
<div style="position:absolute;top:372.32px;font-size:9.8px;line-height:11.8px;color:#1c1c1c;font-weight:normal;white-space:nowrap;left:-140px;width:300px;text-align:center;">10</div>
<div style="position:absolute;left:0px;top:384.52px;width:19.5px;height:1px;background:#cdcdcd;"></div>
<div style="position:absolute;top:387.26000000000005px;font-size:9.8px;line-height:11.8px;color:#1c1c1c;font-weight:normal;white-space:nowrap;left:-140px;width:300px;text-align:center;">11</div>
<div style="position:absolute;left:0px;top:399.46000000000004px;width:19.5px;height:1px;background:#cdcdcd;"></div>
<div style="position:absolute;top:402.2px;font-size:9.8px;line-height:11.8px;color:#1c1c1c;font-weight:normal;white-space:nowrap;left:-140px;width:300px;text-align:center;">12</div>
<div style="position:absolute;left:0px;top:414.4px;width:19.5px;height:1px;background:#cdcdcd;"></div>
<div style="position:absolute;top:417.14000000000004px;font-size:9.8px;line-height:11.8px;color:#1c1c1c;font-weight:normal;white-space:nowrap;left:-140px;width:300px;text-align:center;">13</div>
<div style="position:absolute;left:0px;top:429.34000000000003px;width:19.5px;height:1px;background:#cdcdcd;"></div>
<div style="position:absolute;top:432.08px;font-size:9.8px;line-height:11.8px;color:#1c1c1c;font-weight:normal;white-space:nowrap;left:-140px;width:300px;text-align:center;">14</div>
<div style="position:absolute;left:0px;top:444.28px;width:19.5px;height:1px;background:#cdcdcd;"></div>
<div style="position:absolute;top:447.02000000000004px;font-size:9.8px;line-height:11.8px;color:#1c1c1c;font-weight:normal;white-space:nowrap;left:-140px;width:300px;text-align:center;">15</div>
<div style="position:absolute;left:0px;top:459.22px;width:19.5px;height:1px;background:#cdcdcd;"></div>
<div style="position:absolute;top:461.96px;font-size:9.8px;line-height:11.8px;color:#1c1c1c;font-weight:normal;white-space:nowrap;left:-140px;width:300px;text-align:center;">16</div>
<div style="position:absolute;left:0px;top:474.15999999999997px;width:19.5px;height:1px;background:#cdcdcd;"></div>
<div style="position:absolute;top:476.90000000000003px;font-size:9.8px;line-height:11.8px;color:#1c1c1c;font-weight:normal;white-space:nowrap;left:-140px;width:300px;text-align:center;">17</div>
<div style="position:absolute;left:0px;top:489.1px;width:19.5px;height:1px;background:#cdcdcd;"></div>
<div style="position:absolute;top:491.84px;font-size:9.8px;line-height:11.8px;color:#1c1c1c;font-weight:normal;white-space:nowrap;left:-140px;width:300px;text-align:center;">18</div>
<div style="position:absolute;left:0px;top:504.03999999999996px;width:19.5px;height:1px;background:#cdcdcd;"></div>
<svg style="position:absolute;left:0;top:0" width="1024" height="576" viewBox="0 0 1024 576"><path d="M20.5 201.3H812.5" stroke="#262626" stroke-width="1.1"/><path d="M20.5 265.50H812.5" stroke="#262626" stroke-width="1"/><path d="M20.5 280.44H812.5" stroke="#262626" stroke-width="1"/><path d="M20.5 295.38H812.5" stroke="#262626" stroke-width="1"/><path d="M20.5 310.32H812.5" stroke="#262626" stroke-width="1"/><path d="M20.5 325.26H812.5" stroke="#262626" stroke-width="1"/><path d="M20.5 340.20H812.5" stroke="#262626" stroke-width="1"/><path d="M20.5 355.14H812.5" stroke="#262626" stroke-width="1"/><path d="M20.5 370.08H812.5" stroke="#262626" stroke-width="1"/><path d="M20.5 385.02H812.5" stroke="#262626" stroke-width="1"/><path d="M20.5 399.96H812.5" stroke="#262626" stroke-width="1"/><path d="M20.5 414.90H812.5" stroke="#262626" stroke-width="1"/><path d="M20.5 429.84H812.5" stroke="#262626" stroke-width="1"/><path d="M20.5 444.78H812.5" stroke="#262626" stroke-width="1"/><path d="M20.5 459.72H812.5" stroke="#262626" stroke-width="1"/><path d="M20.5 474.66H812.5" stroke="#262626" stroke-width="1"/><path d="M20.5 489.60H812.5" stroke="#262626" stroke-width="1"/><path d="M20.5 504.54H812.5" stroke="#262626" stroke-width="1"/><path d="M336.5 201.5V519.5" stroke="#262626" stroke-width="1"/><path d="M393.5 201.5V519.5" stroke="#262626" stroke-width="1"/><path d="M472.5 201.5V519.5" stroke="#262626" stroke-width="1"/><path d="M549.5 201.5V519.5" stroke="#262626" stroke-width="1"/><path d="M637.5 201.5V519.5" stroke="#262626" stroke-width="1"/><path d="M725.5 201.5V519.5" stroke="#262626" stroke-width="1"/></svg>
<div style="position:absolute;left:20px;top:137.5px;width:794.5px;height:1.3px;background:#4646a0;"></div>
<div style="position:absolute;left:20px;top:137.5px;width:1.3px;height:382.0px;background:#404090;"></div>
<div style="position:absolute;left:811.8px;top:137.5px;width:2.7px;height:382.0px;background:#2222a4;"></div>
<div style="position:absolute;top:138.35px;font-size:10.6px;line-height:12.6px;color:#000;font-weight:bold;white-space:nowrap;left:22px;line-height:13px;">Pressupostos do modelo: Unidade de produção extrativa (colocação c/ 300 ha e 450 seringueiras em fase de produção). o modelo é baseado na unidade de</div>
<div style="position:absolute;top:151.6px;font-size:10.6px;line-height:12.6px;color:#000;font-weight:bold;white-space:nowrap;left:22px;line-height:13px;">produção familiar, administrada pelo produtor, e representa o sistema de produção utilizado pela maioria dos extrativistas, com 8 meses de exploração</div>
<div style="position:absolute;top:164.85px;font-size:10.6px;line-height:12.6px;color:#000;font-weight:bold;white-space:nowrap;left:22px;line-height:13px;">anual e produção média de 500 kg por colocação. Preço do produto considerado no local de comercialização e venda na forma de borracha seca com</div>
<div style="position:absolute;top:178.1px;font-size:10.6px;line-height:12.6px;color:#000;font-weight:bold;white-space:nowrap;left:22px;line-height:13px;">destino para a fabricação de preservativos.</div>
<div style="position:absolute;top:227.325px;font-size:10.6px;line-height:12.6px;color:#000;font-weight:bold;white-space:nowrap;left:28px;width:300px;text-align:center;line-height:13px;">Especificação</div>
<div style="position:absolute;top:227.325px;font-size:10.6px;line-height:12.6px;color:#000;font-weight:bold;white-space:nowrap;left:215.0px;width:300px;text-align:center;line-height:13px;">Unidade</div>
<div style="position:absolute;top:227.325px;font-size:10.6px;line-height:12.6px;color:#000;font-weight:bold;white-space:nowrap;left:283.0px;width:300px;text-align:center;line-height:13px;">Quantidade</div>
<div style="position:absolute;top:220.24999999999997px;font-size:10.6px;line-height:12.6px;color:#000;font-weight:bold;white-space:nowrap;left:362px;width:300px;text-align:center;line-height:13px;">Valor Unitário</div>
<div style="position:absolute;top:233.79999999999998px;font-size:10.6px;line-height:12.6px;color:#000;font-weight:bold;white-space:nowrap;left:362px;width:300px;text-align:center;line-height:13px;">(R$)</div>
<div style="position:absolute;top:213.77499999999998px;font-size:10.6px;line-height:12.6px;color:#000;font-weight:bold;white-space:nowrap;left:445px;width:300px;text-align:center;line-height:13px;">Valor</div>
<div style="position:absolute;top:227.325px;font-size:10.6px;line-height:12.6px;color:#000;font-weight:bold;white-space:nowrap;left:445px;width:300px;text-align:center;line-height:13px;">Total</div>
<div style="position:absolute;top:240.87499999999997px;font-size:10.6px;line-height:12.6px;color:#000;font-weight:bold;white-space:nowrap;left:445px;width:300px;text-align:center;line-height:13px;">(R$)</div>
<div style="position:absolute;top:213.77499999999998px;font-size:10.6px;line-height:12.6px;color:#000;font-weight:bold;white-space:nowrap;left:532.5px;width:300px;text-align:center;line-height:13px;">Custo do Látex</div>
<div style="position:absolute;top:227.325px;font-size:10.6px;line-height:12.6px;color:#000;font-weight:bold;white-space:nowrap;left:532.5px;width:300px;text-align:center;line-height:13px;">rateado</div>
<div style="position:absolute;top:240.87499999999997px;font-size:10.6px;line-height:12.6px;color:#000;font-weight:bold;white-space:nowrap;left:532.5px;width:300px;text-align:center;line-height:13px;">(R$)</div>
<div style="position:absolute;top:206.8px;font-size:10.6px;line-height:12.6px;color:#000;font-weight:bold;white-space:nowrap;left:619px;width:300px;text-align:center;line-height:13px;">Porcentagem</div>
<div style="position:absolute;top:220.35000000000002px;font-size:10.6px;line-height:12.6px;color:#000;font-weight:bold;white-space:nowrap;left:619px;width:300px;text-align:center;line-height:13px;">em relação ao</div>
<div style="position:absolute;top:233.9px;font-size:10.6px;line-height:12.6px;color:#000;font-weight:bold;white-space:nowrap;left:619px;width:300px;text-align:center;line-height:13px;">custo</div>
<div style="position:absolute;top:247.45000000000002px;font-size:10.6px;line-height:12.6px;color:#000;font-weight:bold;white-space:nowrap;left:619px;width:300px;text-align:center;line-height:13px;">(%)</div>
<div style="position:absolute;top:266.7px;font-size:10.6px;line-height:12.6px;color:#000;font-weight:bold;white-space:nowrap;left:26px;line-height:13px;">1. Custos Fixos</div>
<div style="position:absolute;top:266.0px;font-size:10.6px;line-height:12.6px;color:#000;font-weight:bold;white-space:nowrap;left:216.5px;width:300px;text-align:center;line-height:13px;">R$</div>
<div style="position:absolute;top:266.7px;font-size:10.6px;line-height:12.6px;color:#000;font-weight:bold;white-space:nowrap;left:332px;width:300px;text-align:right;line-height:13px;">19.735,79</div>
<div style="position:absolute;top:266.7px;font-size:10.6px;line-height:12.6px;color:#000;font-weight:bold;white-space:nowrap;left:419.5px;width:300px;text-align:right;line-height:13px;">1.095,18</div>
<div style="position:absolute;top:266.7px;font-size:10.6px;line-height:12.6px;color:#000;font-weight:bold;white-space:nowrap;left:619.0px;width:300px;text-align:center;line-height:13px;">29,33</div>
<div style="position:absolute;top:281.64px;font-size:10.6px;line-height:12.6px;color:#000;font-weight:bold;white-space:nowrap;left:31.5px;line-height:13px;">1.1 Depreciação de materiais (coleta de látex)</div>
<div style="position:absolute;top:281.64px;font-size:10.6px;line-height:12.6px;color:#000;font-weight:bold;white-space:nowrap;left:215.0px;width:300px;text-align:center;line-height:13px;">R$</div>
<div style="position:absolute;top:281.64px;font-size:10.6px;line-height:12.6px;color:#000;font-weight:bold;white-space:nowrap;left:332px;width:300px;text-align:right;line-height:13px;">394,35</div>
<div style="position:absolute;top:280.14px;font-size:10.6px;line-height:12.6px;color:#000;font-weight:bold;white-space:nowrap;left:419.5px;width:300px;text-align:right;line-height:13px;">394,35</div>
<div style="position:absolute;top:281.64px;font-size:10.6px;line-height:12.6px;color:#000;font-weight:bold;white-space:nowrap;left:619.0px;width:300px;text-align:center;line-height:13px;">10,56</div>
<div style="position:absolute;top:296.78px;font-size:10.6px;line-height:12.6px;color:#000;font-weight:normal;white-space:nowrap;left:34.5px;line-height:13px;">Terçado</div>
<div style="position:absolute;top:296.78px;font-size:10.6px;line-height:12.6px;color:#000;font-weight:normal;white-space:nowrap;left:215.0px;width:300px;text-align:center;line-height:13px;">und</div>
<div style="position:absolute;top:296.78px;font-size:10.6px;line-height:12.6px;color:#000;font-weight:normal;white-space:nowrap;left:283.0px;width:300px;text-align:center;line-height:13px;">1</div>
<div style="position:absolute;top:296.78px;font-size:10.6px;line-height:12.6px;color:#000;font-weight:normal;white-space:nowrap;left:244.5px;width:300px;text-align:right;line-height:13px;">26,00</div>
<div style="position:absolute;top:296.78px;font-size:10.6px;line-height:12.6px;color:#000;font-weight:normal;white-space:nowrap;left:332px;width:300px;text-align:right;line-height:13px;">26,00</div>
<div style="position:absolute;top:296.78px;font-size:10.6px;line-height:12.6px;color:#000;font-weight:normal;white-space:nowrap;left:419.5px;width:300px;text-align:right;line-height:13px;">26,00</div>
<div style="position:absolute;top:296.78px;font-size:10.6px;line-height:12.6px;color:#000;font-weight:normal;white-space:nowrap;left:619.0px;width:300px;text-align:center;line-height:13px;">0,70</div>
<div style="position:absolute;top:311.71999999999997px;font-size:10.6px;line-height:12.6px;color:#000;font-weight:normal;white-space:nowrap;left:34.5px;line-height:13px;">Faca de bainha</div>
<div style="position:absolute;top:311.71999999999997px;font-size:10.6px;line-height:12.6px;color:#000;font-weight:normal;white-space:nowrap;left:215.0px;width:300px;text-align:center;line-height:13px;">und</div>
<div style="position:absolute;top:311.71999999999997px;font-size:10.6px;line-height:12.6px;color:#000;font-weight:normal;white-space:nowrap;left:283.0px;width:300px;text-align:center;line-height:13px;">1</div>
<div style="position:absolute;top:311.71999999999997px;font-size:10.6px;line-height:12.6px;color:#000;font-weight:normal;white-space:nowrap;left:244.5px;width:300px;text-align:right;line-height:13px;">26,00</div>
<div style="position:absolute;top:311.71999999999997px;font-size:10.6px;line-height:12.6px;color:#000;font-weight:normal;white-space:nowrap;left:332px;width:300px;text-align:right;line-height:13px;">26,00</div>
<div style="position:absolute;top:311.71999999999997px;font-size:10.6px;line-height:12.6px;color:#000;font-weight:normal;white-space:nowrap;left:419.5px;width:300px;text-align:right;line-height:13px;">26,00</div>
<div style="position:absolute;top:311.71999999999997px;font-size:10.6px;line-height:12.6px;color:#000;font-weight:normal;white-space:nowrap;left:619.0px;width:300px;text-align:center;line-height:13px;">0,70</div>
<div style="position:absolute;top:326.65999999999997px;font-size:10.6px;line-height:12.6px;color:#000;font-weight:normal;white-space:nowrap;left:34.5px;line-height:13px;">Calça de tecido</div>
<div style="position:absolute;top:326.65999999999997px;font-size:10.6px;line-height:12.6px;color:#000;font-weight:normal;white-space:nowrap;left:215.0px;width:300px;text-align:center;line-height:13px;">und</div>
<div style="position:absolute;top:326.65999999999997px;font-size:10.6px;line-height:12.6px;color:#000;font-weight:normal;white-space:nowrap;left:283.0px;width:300px;text-align:center;line-height:13px;">1</div>
<div style="position:absolute;top:326.65999999999997px;font-size:10.6px;line-height:12.6px;color:#000;font-weight:normal;white-space:nowrap;left:244.5px;width:300px;text-align:right;line-height:13px;">40,00</div>
<div style="position:absolute;top:326.65999999999997px;font-size:10.6px;line-height:12.6px;color:#000;font-weight:normal;white-space:nowrap;left:332px;width:300px;text-align:right;line-height:13px;">40,00</div>
<div style="position:absolute;top:326.65999999999997px;font-size:10.6px;line-height:12.6px;color:#000;font-weight:normal;white-space:nowrap;left:419.5px;width:300px;text-align:right;line-height:13px;">40,00</div>
<div style="position:absolute;top:326.65999999999997px;font-size:10.6px;line-height:12.6px;color:#000;font-weight:normal;white-space:nowrap;left:619.0px;width:300px;text-align:center;line-height:13px;">1,07</div>
<div style="position:absolute;top:341.59999999999997px;font-size:10.6px;line-height:12.6px;color:#000;font-weight:normal;white-space:nowrap;left:34.5px;line-height:13px;">Bota de borracha</div>
<div style="position:absolute;top:341.59999999999997px;font-size:10.6px;line-height:12.6px;color:#000;font-weight:normal;white-space:nowrap;left:215.0px;width:300px;text-align:center;line-height:13px;">par</div>
<div style="position:absolute;top:341.59999999999997px;font-size:10.6px;line-height:12.6px;color:#000;font-weight:normal;white-space:nowrap;left:283.0px;width:300px;text-align:center;line-height:13px;">1</div>
<div style="position:absolute;top:341.59999999999997px;font-size:10.6px;line-height:12.6px;color:#000;font-weight:normal;white-space:nowrap;left:244.5px;width:300px;text-align:right;line-height:13px;">22,00</div>
<div style="position:absolute;top:341.59999999999997px;font-size:10.6px;line-height:12.6px;color:#000;font-weight:normal;white-space:nowrap;left:332px;width:300px;text-align:right;line-height:13px;">22,00</div>
<div style="position:absolute;top:341.59999999999997px;font-size:10.6px;line-height:12.6px;color:#000;font-weight:normal;white-space:nowrap;left:419.5px;width:300px;text-align:right;line-height:13px;">22,00</div>
<div style="position:absolute;top:341.59999999999997px;font-size:10.6px;line-height:12.6px;color:#000;font-weight:normal;white-space:nowrap;left:619.0px;width:300px;text-align:center;line-height:13px;">0,59</div>
<div style="position:absolute;top:356.53999999999996px;font-size:10.6px;line-height:12.6px;color:#000;font-weight:normal;white-space:nowrap;left:34.5px;line-height:13px;">Lima</div>
<div style="position:absolute;top:356.53999999999996px;font-size:10.6px;line-height:12.6px;color:#000;font-weight:normal;white-space:nowrap;left:215.0px;width:300px;text-align:center;line-height:13px;">und</div>
<div style="position:absolute;top:356.53999999999996px;font-size:10.6px;line-height:12.6px;color:#000;font-weight:normal;white-space:nowrap;left:283.0px;width:300px;text-align:center;line-height:13px;">3</div>
<div style="position:absolute;top:356.53999999999996px;font-size:10.6px;line-height:12.6px;color:#000;font-weight:normal;white-space:nowrap;left:244.5px;width:300px;text-align:right;line-height:13px;">8,00</div>
<div style="position:absolute;top:356.53999999999996px;font-size:10.6px;line-height:12.6px;color:#000;font-weight:normal;white-space:nowrap;left:332px;width:300px;text-align:right;line-height:13px;">24,00</div>
<div style="position:absolute;top:356.53999999999996px;font-size:10.6px;line-height:12.6px;color:#000;font-weight:normal;white-space:nowrap;left:419.5px;width:300px;text-align:right;line-height:13px;">24,00</div>
<div style="position:absolute;top:356.53999999999996px;font-size:10.6px;line-height:12.6px;color:#000;font-weight:normal;white-space:nowrap;left:619.0px;width:300px;text-align:center;line-height:13px;">0,64</div>
<div style="position:absolute;top:370.58px;font-size:10.6px;line-height:12.6px;color:#000;font-weight:normal;white-space:nowrap;left:34.5px;line-height:13px;">Bica</div>
<div style="position:absolute;top:371.88px;font-size:10.6px;line-height:12.6px;color:#000;font-weight:normal;white-space:nowrap;left:215.0px;width:300px;text-align:center;line-height:13px;">FRC</div>
<div style="position:absolute;top:370.58px;font-size:10.6px;line-height:12.6px;color:#000;font-weight:normal;white-space:nowrap;left:283.0px;width:300px;text-align:center;line-height:13px;">700</div>
<div style="position:absolute;top:370.58px;font-size:10.6px;line-height:12.6px;color:#000;font-weight:normal;white-space:nowrap;left:244.5px;width:300px;text-align:right;line-height:13px;">0,10</div>
<div style="position:absolute;top:370.58px;font-size:10.6px;line-height:12.6px;color:#000;font-weight:normal;white-space:nowrap;left:332px;width:300px;text-align:right;line-height:13px;">70,70</div>
<div style="position:absolute;top:371.88px;font-size:10.6px;line-height:12.6px;color:#000;font-weight:normal;white-space:nowrap;left:419.5px;width:300px;text-align:right;line-height:13px;">70,70</div>
<div style="position:absolute;top:371.88px;font-size:10.6px;line-height:12.6px;color:#000;font-weight:normal;white-space:nowrap;left:619.0px;width:300px;text-align:center;line-height:13px;">1,89</div>
<div style="position:absolute;top:385.52px;font-size:10.6px;line-height:12.6px;color:#000;font-weight:normal;white-space:nowrap;left:34.5px;line-height:13px;">Tigela</div>
<div style="position:absolute;top:386.82px;font-size:10.6px;line-height:12.6px;color:#000;font-weight:normal;white-space:nowrap;left:215.0px;width:300px;text-align:center;line-height:13px;">FRC</div>
<div style="position:absolute;top:385.52px;font-size:10.6px;line-height:12.6px;color:#000;font-weight:normal;white-space:nowrap;left:283.0px;width:300px;text-align:center;line-height:13px;">700</div>
<div style="position:absolute;top:385.52px;font-size:10.6px;line-height:12.6px;color:#000;font-weight:normal;white-space:nowrap;left:244.5px;width:300px;text-align:right;line-height:13px;">0,12</div>
<div style="position:absolute;top:385.52px;font-size:10.6px;line-height:12.6px;color:#000;font-weight:normal;white-space:nowrap;left:332px;width:300px;text-align:right;line-height:13px;">86,42</div>
<div style="position:absolute;top:386.82px;font-size:10.6px;line-height:12.6px;color:#000;font-weight:normal;white-space:nowrap;left:419.5px;width:300px;text-align:right;line-height:13px;">86,42</div>
<div style="position:absolute;top:386.82px;font-size:10.6px;line-height:12.6px;color:#000;font-weight:normal;white-space:nowrap;left:619.0px;width:300px;text-align:center;line-height:13px;">2,31</div>
<div style="position:absolute;top:400.46000000000004px;font-size:10.6px;line-height:12.6px;color:#000;font-weight:normal;white-space:nowrap;left:34.5px;line-height:13px;">Lâmina de corte</div>
<div style="position:absolute;top:401.76000000000005px;font-size:10.6px;line-height:12.6px;color:#000;font-weight:normal;white-space:nowrap;left:215.0px;width:300px;text-align:center;line-height:13px;">FRC</div>
<div style="position:absolute;top:400.46000000000004px;font-size:10.6px;line-height:12.6px;color:#000;font-weight:normal;white-space:nowrap;left:283.0px;width:300px;text-align:center;line-height:13px;">2</div>
<div style="position:absolute;top:400.46000000000004px;font-size:10.6px;line-height:12.6px;color:#000;font-weight:normal;white-space:nowrap;left:244.5px;width:300px;text-align:right;line-height:13px;">5,09</div>
<div style="position:absolute;top:400.46000000000004px;font-size:10.6px;line-height:12.6px;color:#000;font-weight:normal;white-space:nowrap;left:332px;width:300px;text-align:right;line-height:13px;">10,18</div>
<div style="position:absolute;top:401.76000000000005px;font-size:10.6px;line-height:12.6px;color:#000;font-weight:normal;white-space:nowrap;left:419.5px;width:300px;text-align:right;line-height:13px;">10,18</div>
<div style="position:absolute;top:401.76000000000005px;font-size:10.6px;line-height:12.6px;color:#000;font-weight:normal;white-space:nowrap;left:619.0px;width:300px;text-align:center;line-height:13px;">0,27</div>
<div style="position:absolute;top:415.4px;font-size:10.6px;line-height:12.6px;color:#000;font-weight:normal;white-space:nowrap;left:34.5px;line-height:13px;">Peneira</div>
<div style="position:absolute;top:416.7px;font-size:10.6px;line-height:12.6px;color:#000;font-weight:normal;white-space:nowrap;left:215.0px;width:300px;text-align:center;line-height:13px;">FRC</div>
<div style="position:absolute;top:415.4px;font-size:10.6px;line-height:12.6px;color:#000;font-weight:normal;white-space:nowrap;left:283.0px;width:300px;text-align:center;line-height:13px;">1</div>
<div style="position:absolute;top:415.4px;font-size:10.6px;line-height:12.6px;color:#000;font-weight:normal;white-space:nowrap;left:244.5px;width:300px;text-align:right;line-height:13px;">12,77</div>
<div style="position:absolute;top:415.4px;font-size:10.6px;line-height:12.6px;color:#000;font-weight:normal;white-space:nowrap;left:332px;width:300px;text-align:right;line-height:13px;">12,77</div>
<div style="position:absolute;top:416.7px;font-size:10.6px;line-height:12.6px;color:#000;font-weight:normal;white-space:nowrap;left:419.5px;width:300px;text-align:right;line-height:13px;">12,77</div>
<div style="position:absolute;top:416.7px;font-size:10.6px;line-height:12.6px;color:#000;font-weight:normal;white-space:nowrap;left:619.0px;width:300px;text-align:center;line-height:13px;">0,34</div>
<div style="position:absolute;top:430.34000000000003px;font-size:10.6px;line-height:12.6px;color:#000;font-weight:normal;white-space:nowrap;left:34.5px;line-height:13px;">Cabrita</div>
<div style="position:absolute;top:431.64000000000004px;font-size:10.6px;line-height:12.6px;color:#000;font-weight:normal;white-space:nowrap;left:215.0px;width:300px;text-align:center;line-height:13px;">FRC</div>
<div style="position:absolute;top:430.34000000000003px;font-size:10.6px;line-height:12.6px;color:#000;font-weight:normal;white-space:nowrap;left:283.0px;width:300px;text-align:center;line-height:13px;">1</div>
<div style="position:absolute;top:430.34000000000003px;font-size:10.6px;line-height:12.6px;color:#000;font-weight:normal;white-space:nowrap;left:244.5px;width:300px;text-align:right;line-height:13px;">0,44</div>
<div style="position:absolute;top:430.34000000000003px;font-size:10.6px;line-height:12.6px;color:#000;font-weight:normal;white-space:nowrap;left:332px;width:300px;text-align:right;line-height:13px;">0,44</div>
<div style="position:absolute;top:431.64000000000004px;font-size:10.6px;line-height:12.6px;color:#000;font-weight:normal;white-space:nowrap;left:419.5px;width:300px;text-align:right;line-height:13px;">0,44</div>
<div style="position:absolute;top:431.64000000000004px;font-size:10.6px;line-height:12.6px;color:#000;font-weight:normal;white-space:nowrap;left:619.0px;width:300px;text-align:center;line-height:13px;">0,01</div>
<div style="position:absolute;top:445.28px;font-size:10.6px;line-height:12.6px;color:#000;font-weight:normal;white-space:nowrap;left:34.5px;line-height:13px;">Balde de 5 litros</div>
<div style="position:absolute;top:446.58px;font-size:10.6px;line-height:12.6px;color:#000;font-weight:normal;white-space:nowrap;left:215.0px;width:300px;text-align:center;line-height:13px;">FRC</div>
<div style="position:absolute;top:445.28px;font-size:10.6px;line-height:12.6px;color:#000;font-weight:normal;white-space:nowrap;left:283.0px;width:300px;text-align:center;line-height:13px;">1</div>
<div style="position:absolute;top:445.28px;font-size:10.6px;line-height:12.6px;color:#000;font-weight:normal;white-space:nowrap;left:244.5px;width:300px;text-align:right;line-height:13px;">9,16</div>
<div style="position:absolute;top:445.28px;font-size:10.6px;line-height:12.6px;color:#000;font-weight:normal;white-space:nowrap;left:332px;width:300px;text-align:right;line-height:13px;">9,16</div>
<div style="position:absolute;top:446.58px;font-size:10.6px;line-height:12.6px;color:#000;font-weight:normal;white-space:nowrap;left:419.5px;width:300px;text-align:right;line-height:13px;">9,16</div>
<div style="position:absolute;top:446.58px;font-size:10.6px;line-height:12.6px;color:#000;font-weight:normal;white-space:nowrap;left:619.0px;width:300px;text-align:center;line-height:13px;">0,25</div>
<div style="position:absolute;top:460.22px;font-size:10.6px;line-height:12.6px;color:#000;font-weight:normal;white-space:nowrap;left:34.5px;line-height:13px;">Balde de 30 litros (bombona)</div>
<div style="position:absolute;top:461.52000000000004px;font-size:10.6px;line-height:12.6px;color:#000;font-weight:normal;white-space:nowrap;left:215.0px;width:300px;text-align:center;line-height:13px;">FRC</div>
<div style="position:absolute;top:460.22px;font-size:10.6px;line-height:12.6px;color:#000;font-weight:normal;white-space:nowrap;left:283.0px;width:300px;text-align:center;line-height:13px;">2</div>
<div style="position:absolute;top:460.22px;font-size:10.6px;line-height:12.6px;color:#000;font-weight:normal;white-space:nowrap;left:244.5px;width:300px;text-align:right;line-height:13px;">25,09</div>
<div style="position:absolute;top:460.22px;font-size:10.6px;line-height:12.6px;color:#000;font-weight:normal;white-space:nowrap;left:332px;width:300px;text-align:right;line-height:13px;">50,18</div>
<div style="position:absolute;top:461.52000000000004px;font-size:10.6px;line-height:12.6px;color:#000;font-weight:normal;white-space:nowrap;left:419.5px;width:300px;text-align:right;line-height:13px;">50,18</div>
<div style="position:absolute;top:461.52000000000004px;font-size:10.6px;line-height:12.6px;color:#000;font-weight:normal;white-space:nowrap;left:619.0px;width:300px;text-align:center;line-height:13px;">1,34</div>
<div style="position:absolute;top:475.15999999999997px;font-size:10.6px;line-height:12.6px;color:#000;font-weight:normal;white-space:nowrap;left:34.5px;line-height:13px;">Saco de napa</div>
<div style="position:absolute;top:476.46px;font-size:10.6px;line-height:12.6px;color:#000;font-weight:normal;white-space:nowrap;left:215.0px;width:300px;text-align:center;line-height:13px;">m</div>
<div style="position:absolute;top:475.15999999999997px;font-size:10.6px;line-height:12.6px;color:#000;font-weight:normal;white-space:nowrap;left:283.0px;width:300px;text-align:center;line-height:13px;">1</div>
<div style="position:absolute;top:475.15999999999997px;font-size:10.6px;line-height:12.6px;color:#000;font-weight:normal;white-space:nowrap;left:244.5px;width:300px;text-align:right;line-height:13px;">9,00</div>
<div style="position:absolute;top:475.15999999999997px;font-size:10.6px;line-height:12.6px;color:#000;font-weight:normal;white-space:nowrap;left:332px;width:300px;text-align:right;line-height:13px;">9,00</div>
<div style="position:absolute;top:476.46px;font-size:10.6px;line-height:12.6px;color:#000;font-weight:normal;white-space:nowrap;left:419.5px;width:300px;text-align:right;line-height:13px;">9,00</div>
<div style="position:absolute;top:476.46px;font-size:10.6px;line-height:12.6px;color:#000;font-weight:normal;white-space:nowrap;left:619.0px;width:300px;text-align:center;line-height:13px;">0,24</div>
<div style="position:absolute;top:490.1px;font-size:10.6px;line-height:12.6px;color:#000;font-weight:normal;white-space:nowrap;left:34.5px;line-height:13px;">Saco de Estopa</div>
<div style="position:absolute;top:491.40000000000003px;font-size:10.6px;line-height:12.6px;color:#000;font-weight:normal;white-space:nowrap;left:215.0px;width:300px;text-align:center;line-height:13px;">und</div>
<div style="position:absolute;top:490.1px;font-size:10.6px;line-height:12.6px;color:#000;font-weight:normal;white-space:nowrap;left:283.0px;width:300px;text-align:center;line-height:13px;">3</div>
<div style="position:absolute;top:490.1px;font-size:10.6px;line-height:12.6px;color:#000;font-weight:normal;white-space:nowrap;left:244.5px;width:300px;text-align:right;line-height:13px;">2,50</div>
<div style="position:absolute;top:490.1px;font-size:10.6px;line-height:12.6px;color:#000;font-weight:normal;white-space:nowrap;left:332px;width:300px;text-align:right;line-height:13px;">7,50</div>
<div style="position:absolute;top:491.40000000000003px;font-size:10.6px;line-height:12.6px;color:#000;font-weight:normal;white-space:nowrap;left:419.5px;width:300px;text-align:right;line-height:13px;">7,50</div>
<div style="position:absolute;top:491.40000000000003px;font-size:10.6px;line-height:12.6px;color:#000;font-weight:normal;white-space:nowrap;left:619.0px;width:300px;text-align:center;line-height:13px;">0,20</div>
<div style="position:absolute;top:505.73999999999995px;font-size:10.6px;line-height:12.6px;color:#000;font-weight:bold;white-space:nowrap;left:31.5px;line-height:13px;">1.2 Depreciação de materiais (transformação do látex em</div>
<div style="position:absolute;top:505.73999999999995px;font-size:10.6px;line-height:12.6px;color:#000;font-weight:bold;white-space:nowrap;left:215.0px;width:300px;text-align:center;line-height:13px;">R$</div>
<div style="position:absolute;top:505.73999999999995px;font-size:10.6px;line-height:12.6px;color:#000;font-weight:bold;white-space:nowrap;left:332px;width:300px;text-align:right;line-height:13px;">326,58</div>
<div style="position:absolute;top:505.73999999999995px;font-size:10.6px;line-height:12.6px;color:#000;font-weight:bold;white-space:nowrap;left:419.5px;width:300px;text-align:right;line-height:13px;">9,90</div>
<div style="position:absolute;top:505.73999999999995px;font-size:10.6px;line-height:12.6px;color:#000;font-weight:bold;white-space:nowrap;left:619.0px;width:300px;text-align:center;line-height:13px;">0,26</div>
<svg style="position:absolute;left:550px;top:505.03999999999996px" width="4" height="4" viewBox="0 0 4 4"><path d="M0 0h3.5L0 3.5z" fill="#1e6b3a"/></svg>
<div style="position:absolute;left:1011px;top:122px;width:13px;height:16px;background:#e6e6e6;"></div>
<div style="position:absolute;left:1010.5px;top:138px;width:13.5px;height:381.5px;background:#d9d9d9;"></div>
<div style="position:absolute;left:1012.5px;top:128px;width:10.5px;height:9px;background:#fff;"></div>
<svg style="position:absolute;left:1015.2px;top:130.8px" width="6" height="4" viewBox="0 0 6 4"><path d="M0 3.4h5.4L2.7 0.4z" fill="#555"/></svg>
<div style="position:absolute;left:1012.5px;top:138px;width:10.5px;height:88.5px;background:#fff;"></div>
<div style="position:absolute;left:1012.5px;top:510px;width:10.5px;height:8.6px;background:#fff;"></div>
<svg style="position:absolute;left:1015.2px;top:512.6px" width="6" height="4" viewBox="0 0 6 4"><path d="M0 0.4h5.4L2.7 3.4z" fill="#555"/></svg>
<div style="position:absolute;left:0px;top:519.5px;width:1024px;height:16px;background:#e6e6e6;"></div>
<div style="position:absolute;left:0px;top:519.5px;width:1024px;height:0.8px;background:#c6c6c6;"></div>
<svg style="position:absolute;left:14px;top:523px" width="5" height="7" viewBox="0 0 5 7"><path d="M4.2 0.6v5.8L0.6 3.5z" fill="#555"/></svg>
<svg style="position:absolute;left:29px;top:523px" width="5" height="7" viewBox="0 0 5 7"><path d="M0.6 0.6v5.8L4.2 3.5z" fill="#c4c4c4"/></svg>
<svg style="position:absolute;left:43px;top:526px" width="8" height="3" viewBox="0 0 8 3"><circle cx="1" cy="1.4" r="0.8" fill="#b0b0b0"/><circle cx="3.8" cy="1.4" r="0.8" fill="#b0b0b0"/><circle cx="6.6" cy="1.4" r="0.8" fill="#b0b0b0"/></svg>
<div style="position:absolute;left:63.8px;top:520.51px;font-size:9.2px;line-height:11.2px;color:#5e5e5e;font-weight:normal;white-space:nowrap;transform-origin:0 0;transform:scaleX(0.9851);">Construção_Ponto Recolhimento</div>
<div style="position:absolute;left:212.5px;top:520.51px;font-size:9.2px;line-height:11.2px;color:#5e5e5e;font-weight:normal;white-space:nowrap;transform-origin:0 0;transform:scaleX(0.7933);">FRC</div>
<div style="position:absolute;left:242.3px;top:520.51px;font-size:9.2px;line-height:11.2px;color:#5e5e5e;font-weight:normal;white-space:nowrap;transform-origin:0 0;transform:scaleX(0.9558);">Produção dos PR's</div>
<div style="position:absolute;left:333px;top:520.51px;font-size:9.2px;line-height:11.2px;color:#5e5e5e;font-weight:normal;white-space:nowrap;transform-origin:0 0;transform:scaleX(0.8972);">RMOF</div>
<div style="position:absolute;left:373px;top:520.51px;font-size:9.2px;line-height:11.2px;color:#5e5e5e;font-weight:normal;white-space:nowrap;transform-origin:0 0;transform:scaleX(0.9777);">Cenários proposto</div>
<div style="position:absolute;left:55px;top:522px;width:1px;height:10px;background:#c2c2c2;"></div>
<div style="position:absolute;left:205.5px;top:522px;width:1px;height:10px;background:#c2c2c2;"></div>
<div style="position:absolute;left:235px;top:522px;width:1px;height:10px;background:#c2c2c2;"></div>
<div style="position:absolute;left:325.5px;top:522px;width:1px;height:10px;background:#c2c2c2;"></div>
<div style="position:absolute;left:364.8px;top:522px;width:1px;height:10px;background:#c2c2c2;"></div>
<div style="position:absolute;left:666.5px;top:522px;width:1px;height:10px;background:#c2c2c2;"></div>
<div style="position:absolute;left:702.5px;top:522px;width:1px;height:10px;background:#c2c2c2;"></div>
<div style="position:absolute;left:455.6px;top:520px;width:115.6px;height:13px;background:#fff;border-bottom:1.6px solid #217346;"></div>
<div style="position:absolute;left:461.9px;top:520.51px;font-size:9.2px;line-height:11.2px;color:#217346;font-weight:bold;white-space:nowrap;transform-origin:0 0;transform:scaleX(0.9688);">Custo de produção total</div>
<div style="position:absolute;left:579.7px;top:520.51px;font-size:9.2px;line-height:11.2px;color:#5e5e5e;font-weight:normal;white-space:nowrap;transform-origin:0 0;transform:scaleX(1.0101);">Ponto de equilíbrio</div>
<div style="position:absolute;left:673.8px;top:520.51px;font-size:9.2px;line-height:11.2px;color:#5e5e5e;font-weight:normal;white-space:nowrap;transform-origin:0 0;transform:scaleX(0.9265);">Plan1</div>
<svg style="position:absolute;left:720px;top:521px" width="12" height="12" viewBox="0 0 12 12"><circle cx="6" cy="6" r="4.8" fill="none" stroke="#777" stroke-width="0.9"/><path d="M6 3.4v5.2M3.4 6h5.2" stroke="#777" stroke-width="0.9"/></svg>
<svg style="position:absolute;left:837.5px;top:522.5px" width="3" height="10" viewBox="0 0 3 10"><circle cx="1.3" cy="1.5" r="0.7" fill="#aaa"/><circle cx="1.3" cy="4.8" r="0.7" fill="#aaa"/><circle cx="1.3" cy="8.1" r="0.7" fill="#aaa"/></svg>
<div style="position:absolute;left:848.5px;top:522.5px;width:9px;height:9.5px;background:#fff;"></div>
<svg style="position:absolute;left:851px;top:524.6px" width="4" height="6" viewBox="0 0 4 6"><path d="M3.4 0.4v5L0.5 2.9z" fill="#555"/></svg>
<div style="position:absolute;left:858.5px;top:522.5px;width:128.3px;height:9.5px;background:#fff;"></div>
<div style="position:absolute;left:1000.5px;top:522.5px;width:9.5px;height:9.5px;background:#fff;"></div>
<svg style="position:absolute;left:1003.6px;top:524.6px" width="4" height="6" viewBox="0 0 4 6"><path d="M0.5 0.4v5L3.4 2.9z" fill="#555"/></svg>
<div style="position:absolute;left:0px;top:535px;width:1024px;height:14px;background:#f1f1f1;"></div>
<div style="position:absolute;left:3.8px;top:537.2px;font-size:8.5px;line-height:10.5px;color:#555;font-weight:normal;white-space:nowrap;transform-origin:0 0;transform:scaleX(0.8186);">Pronto</div>
<div style="position:absolute;left:888px;top:535px;width:20px;height:14px;background:#c8c8c8;"></div>
<svg style="position:absolute;left:850.5px;top:538px" width="8" height="7" viewBox="0 0 8 7"><rect x="0.4" y="0.4" width="7" height="6" fill="none" stroke="#777" stroke-width="0.8"/><path d="M0.4 2.4h7M0.4 4.4h7M2.7 0.4v6M5 0.4v6" stroke="#777" stroke-width="0.6"/></svg>
<svg style="position:absolute;left:872.5px;top:538px" width="8" height="7" viewBox="0 0 8 7"><rect x="0.4" y="0.4" width="7" height="6" fill="none" stroke="#777" stroke-width="0.8"/><rect x="1.8" y="1.8" width="4.2" height="3.2" fill="none" stroke="#777" stroke-width="0.6"/></svg>
<svg style="position:absolute;left:893px;top:538px" width="11" height="7" viewBox="0 0 11 7"><rect x="0.4" y="0.4" width="9.6" height="6" fill="none" stroke="#666" stroke-width="0.8"/><path d="M3.4 0.4v6M0.4 3.6h9.6" stroke="#666" stroke-width="0.6" stroke-dasharray="1 0.7"/></svg>
<div style="position:absolute;left:912.5px;top:541.6px;width:5px;height:1px;background:#555;"></div>
<div style="position:absolute;left:921px;top:541.8px;width:65px;height:0.8px;background:#b9b9b9;"></div>
<div style="position:absolute;left:952.3px;top:537.2px;width:2.2px;height:8px;background:#555;"></div>
<div style="position:absolute;left:988.8px;top:541.6px;width:5.4px;height:1px;background:#555;"></div>
<div style="position:absolute;left:991px;top:539.4px;width:1px;height:5.4px;background:#555;"></div>
<div style="position:absolute;left:1003px;top:537.43px;font-size:8px;line-height:10px;color:#555;font-weight:normal;white-space:nowrap;transform-origin:0 0;transform:scaleX(0.7953);">110%</div>
<div style="position:absolute;left:0px;top:549px;width:1024px;height:27px;background:#1d1d1f;"></div>
<div style="position:absolute;left:0px;top:549px;width:32px;height:27px;background:#161617;"></div>
<svg style="position:absolute;left:10px;top:557px" width="12" height="11" viewBox="0 0 12 11"><path d="M0 1.6L5.2 0.9v4.3H0zM6 0.8L12 0v5.2H6zM0 5.9h5.2v4.3L0 9.5zM6 5.9h6V11l-6-0.8z" fill="#fff"/></svg>
<div style="position:absolute;left:32px;top:549.5px;width:229px;height:26.5px;background:#f2f2f2;"></div>
<svg style="position:absolute;left:40px;top:556.5px" width="12" height="12" viewBox="0 0 12 12"><circle cx="7.2" cy="4.6" r="3.6" fill="none" stroke="#333" stroke-width="1.1"/><path d="M4.6 7.4L0.8 11.2" stroke="#333" stroke-width="1.2"/></svg>
<div style="position:absolute;left:58.8px;top:557.11px;font-size:10.5px;line-height:12.5px;color:#2b2b2b;font-weight:normal;white-space:nowrap;transform-origin:0 0;transform:scaleX(0.9632);">Digite aqui para pesquisar</div>
<svg style="position:absolute;left:271px;top:556.5px" width="13" height="13" viewBox="0 0 13 13"><circle cx="6.3" cy="6.3" r="4.7" fill="none" stroke="#fff" stroke-width="1.5"/></svg>
<svg style="position:absolute;left:303.5px;top:557.5px" width="13" height="11" viewBox="0 0 13 11"><rect x="2.8" y="0.6" width="5.4" height="2.4" fill="none" stroke="#fff" stroke-width="0.9"/><rect x="2.8" y="6.6" width="5.4" height="2.8" fill="none" stroke="#fff" stroke-width="0.9"/><path d="M0.6 0.4v9.4M10.3 0.4v9.4" stroke="#fff" stroke-width="1"/><path d="M12.2 2v6" stroke="#ddd" stroke-width="0.8"/></svg>
<div style="position:absolute;left:329.8px;top:574.2px;width:26.19999999999999px;height:1.8px;background:#86bdea;"></div>
<div style="position:absolute;left:363px;top:574.2px;width:25.5px;height:1.8px;background:#86bdea;"></div>
<div style="position:absolute;left:396px;top:574.2px;width:26px;height:1.8px;background:#86bdea;"></div>
<div style="position:absolute;left:461px;top:574.2px;width:29px;height:1.8px;background:#86bdea;"></div>
<div style="position:absolute;left:493.8px;top:574.2px;width:29.999999999999943px;height:1.8px;background:#86bdea;"></div>
<svg style="position:absolute;left:335.5px;top:555px" width="16" height="14" viewBox="0 0 16 14"><path d="M0.5 1.2h5l1.2 1.4h8.8v10.6H0.5z" fill="#f6c443"/><path d="M0.5 4.6h15v8.6H0.5z" fill="#fbd768"/><path d="M3.6 8.2h8.8v5H3.6z" fill="#3d8fd6"/><path d="M5.6 10.4h4.8v2.8H5.6z" fill="#9fd0f5"/></svg>
<svg style="position:absolute;left:369.5px;top:555.5px" width="15" height="14" viewBox="0 0 15 14"><rect x="5" y="1" width="9.4" height="11.6" fill="#fff"/><path d="M7.4 3.4h6M7.4 5.6h6M7.4 7.8h6M7.4 10h6" stroke="#2b579a" stroke-width="0.9"/><path d="M0 1.6L8.6 0v13.6L0 12z" fill="#2b579a"/><text x="1.2" y="9.8" font-size="7.6" font-weight="bold" font-family="Liberation Sans" fill="#fff">W</text></svg>
<svg style="position:absolute;left:401.5px;top:554.5px" width="16" height="16" viewBox="0 0 16 16"><circle cx="8" cy="8" r="7.6" fill="#dd4b3e"/><path d="M8 8L1.4 4.2A7.6 7.6 0 0 0 4.2 14.6z" fill="#1aa260"/><path d="M8 8L4.2 14.6A7.6 7.6 0 0 0 15.6 8z" fill="#ffce44"/><path d="M8 8h7.6A7.6 7.6 0 0 0 14.6 4.2z" fill="#ffce44"/><path d="M8 8l6.6-3.8A7.6 7.6 0 0 0 1.4 4.2z" fill="#dd4b3e"/><circle cx="8" cy="8" r="3.5" fill="#fff"/><circle cx="8" cy="8" r="2.7" fill="#4c8bf5"/></svg>
<div style="position:absolute;left:426.5px;top:549px;width:32.5px;height:27px;background:#3c3c3d;"></div>
<div style="position:absolute;left:426.5px;top:574.2px;width:32.5px;height:1.8px;background:#8cc1ee;"></div>
<svg style="position:absolute;left:434.5px;top:555.5px" width="16" height="14" viewBox="0 0 16 14"><rect x="6" y="1" width="9.4" height="11.6" fill="#fff" stroke="#1e7145" stroke-width="0.8"/><path d="M9 3.6h4.6M9 6h4.6M9 8.4h4.6M9 10.6h4.6M11.3 2.4v9.4" stroke="#1e7145" stroke-width="0.8"/><path d="M0 1.6L8.6 0v13.6L0 12z" fill="#1e7145"/><path d="M2.4 4l3.6 5.6M6 4L2.4 9.6" stroke="#fff" stroke-width="1.3"/></svg>
<svg style="position:absolute;left:468.5px;top:555.5px" width="15" height="13" viewBox="0 0 15 13"><rect x="0" y="0.6" width="15" height="11.4" rx="1" fill="#3a2a4a"/><rect x="1" y="1.6" width="13" height="3" fill="#c0392b"/><rect x="1" y="4.6" width="13" height="3.4" fill="#6c4fa3"/><rect x="1" y="8" width="13" height="2.4" fill="#2e6fb5"/><rect x="1" y="10" width="13" height="1.6" fill="#68a040"/><rect x="2" y="2.2" width="2.4" height="2" fill="#e8e0d0"/></svg>
<svg style="position:absolute;left:501px;top:554px" width="16" height="15" viewBox="0 0 16 15"><rect x="0.3" y="0.3" width="15.2" height="14.4" rx="1.6" fill="#d21f1f"/><path d="M3.4 11.6c2.6-1.6 4.2-5 4.2-8 0-1.4-1.6-1.2-1.2 0.6 0.6 2.8 3 5.4 6 5.6 1.4 0 1.2-1.2-0.4-1.2-2.6 0-6.4 1.2-8.2 2.6-0.8 0.6-1 0.8-0.4 0.4z" fill="none" stroke="#fff" stroke-width="0.9"/></svg>
<svg style="position:absolute;left:856px;top:560px" width="9" height="6" viewBox="0 0 9 6"><path d="M0.8 5L4.4 1.4 8 5" stroke="#fff" stroke-width="1.1" fill="none"/></svg>
<svg style="position:absolute;left:869.5px;top:558.5px" width="13" height="8" viewBox="0 0 13 8"><rect x="1.6" y="1.6" width="10.4" height="5.6" fill="#fff"/><rect x="0.4" y="3.2" width="1.4" height="2.4" fill="#fff"/><path d="M2.4 0.4v2M2.4 0.6h2" stroke="#fff" stroke-width="0.8"/></svg>
<svg style="position:absolute;left:887.5px;top:557.8px" width="10" height="10" viewBox="0 0 10 10"><path d="M0.8 9.2a8.4 8.4 0 0 1 8.4-8.4" stroke="#bbb" stroke-width="0.9" fill="none"/><path d="M3 9.2a6.2 6.2 0 0 1 6.2-6.2" stroke="#fff" stroke-width="0.9" fill="none"/><path d="M5.2 9.2a4 4 0 0 1 4-4" stroke="#fff" stroke-width="0.9" fill="none"/><path d="M7.4 9.2a1.8 1.8 0 0 1 1.8-1.8v1.8z" fill="#fff"/></svg>
<svg style="position:absolute;left:901.5px;top:557.5px" width="12" height="10" viewBox="0 0 12 10"><path d="M0.6 3.4h2l2.6-2.4v8L2.6 6.6h-2z" fill="none" stroke="#fff" stroke-width="0.9"/><path d="M6.8 3.2a2.6 2.6 0 0 1 0 3.6" stroke="#fff" stroke-width="0.8" fill="none"/><path d="M8.4 1.8a4.6 4.6 0 0 1 0 6.4" stroke="#ccc" stroke-width="0.8" fill="none"/><path d="M10 0.6a6.4 6.4 0 0 1 0 8.8" stroke="#999" stroke-width="0.7" fill="none"/></svg>
<div style="position:absolute;left:920.5px;top:552.02px;font-size:8.6px;line-height:10.6px;color:#fff;font-weight:normal;white-space:nowrap;transform-origin:0 0;transform:scaleX(0.7781);">POR</div>
<div style="position:absolute;left:919.3px;top:564.02px;font-size:8.6px;line-height:10.6px;color:#fff;font-weight:normal;white-space:nowrap;transform-origin:0 0;transform:scaleX(0.7764);">PTB2</div>
<div style="position:absolute;left:955.5px;top:552.02px;font-size:8.6px;line-height:10.6px;color:#fff;font-weight:normal;white-space:nowrap;transform-origin:0 0;transform:scaleX(0.8364);">15:40</div>
<div style="position:absolute;left:945px;top:564.02px;font-size:8.6px;line-height:10.6px;color:#fff;font-weight:normal;white-space:nowrap;transform-origin:0 0;transform:scaleX(0.9131);">14/07/2020</div>
<svg style="position:absolute;left:996.5px;top:557.3px" width="15" height="15" viewBox="0 0 15 15"><path d="M0.6 0.6h10.2v7.2H4.4L2.2 9.8V7.8H0.6z" fill="#fff"/><path d="M2.4 2.6h6.6M2.4 4.4h6.6" stroke="#1d1d1f" stroke-width="0.7"/><circle cx="10.2" cy="10.8" r="3.7" fill="#1d1d1f" stroke="#ddd" stroke-width="0.8"/><text x="8.5" y="13.2" font-size="6.4" font-family="Liberation Sans" fill="#fff">3</text></svg>
</body></html>
